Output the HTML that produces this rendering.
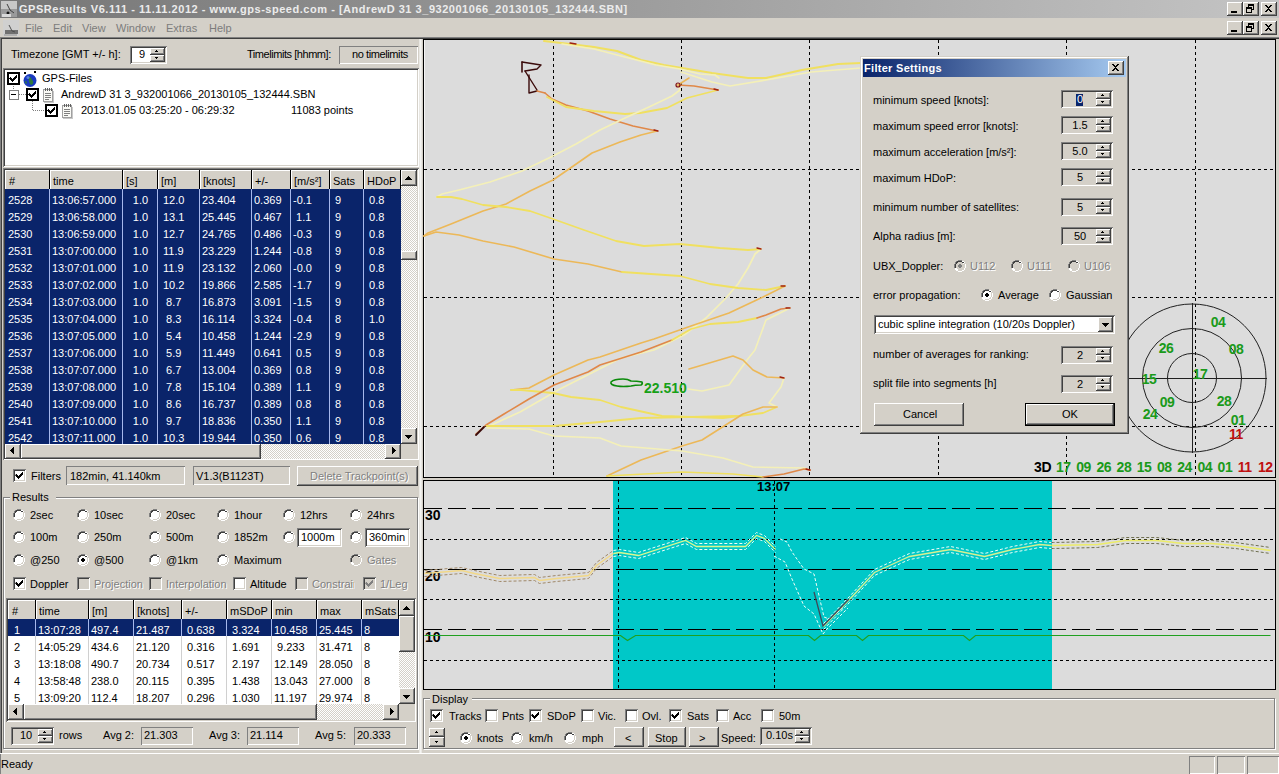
<!DOCTYPE html><html><head><meta charset="utf-8"><style>
*{margin:0;padding:0;box-sizing:border-box}
html,body{width:1279px;height:774px;overflow:hidden;background:#d4d0c8;font-family:"Liberation Sans",sans-serif;font-size:11px;color:#000}
body>div,body>svg{position:absolute}
.t{position:absolute;white-space:pre;line-height:13px;font-size:11px}
.b{font-weight:bold}
</style></head><body>
<div style="left:0px;top:0px;width:1279px;height:18px;background:linear-gradient(90deg,#767676,#c4c4c4)"></div>
<svg style="left:1px;top:1px" width="16" height="16"><rect x="0" y="0" width="16" height="8" fill="#c8c8c8"/><rect x="0" y="8" width="16" height="8" fill="#9a9a9a"/><path d="M6 3l3 6 4 3" stroke="#404040" fill="none"/><circle cx="7" cy="12" r="1.5" fill="#111"/><rect x="1" y="13" width="9" height="3" fill="#d8d8d8"/></svg>
<div class="t" style="left:19px;top:3px;font-weight:bold;color:#ececec;letter-spacing:0.53px">GPSResults V6.111 - 11.11.2012 - www.gps-speed.com - [AndrewD 31 3_932001066_20130105_132444.SBN]</div>
<div style="left:1227px;top:2px;width:16px;height:14px;background:#d4d0c8;box-shadow:inset -1px -1px #404040,inset 1px 1px #fff,inset -2px -2px #808080,inset 2px 2px #d4d0c8;"></div>
<div style="left:1243px;top:2px;width:16px;height:14px;background:#d4d0c8;box-shadow:inset -1px -1px #404040,inset 1px 1px #fff,inset -2px -2px #808080,inset 2px 2px #d4d0c8;"></div>
<div style="left:1261px;top:2px;width:16px;height:14px;background:#d4d0c8;box-shadow:inset -1px -1px #404040,inset 1px 1px #fff,inset -2px -2px #808080,inset 2px 2px #d4d0c8;"></div>
<svg style="left:1227px;top:2px" width="50" height="14" shape-rendering="crispEdges"><rect x="4" y="9" width="6" height="2" fill="#000"/><g fill="#000"><rect x="21" y="2" width="6" height="2"/><rect x="21" y="4" width="1" height="1"/><rect x="26" y="4" width="1" height="4"/><rect x="25" y="7" width="1" height="1"/><rect x="19" y="5" width="6" height="2"/><rect x="19" y="7" width="1" height="4"/><rect x="24" y="7" width="1" height="4"/><rect x="19" y="10" width="6" height="1"/></g><path d="M38 3h2v1h1v1h1v-1h1v-1h2v1h-1v1h-1v1h-1v1h1v1h1v1h1v1h-2v-1h-1v-1h-1v1h-1v1h-2v-1h1v-1h1v-1h1v-1h-1v-1h-1v-1h-1z" fill="#000"/></svg>
<svg style="left:3px;top:20px" width="16" height="16"><rect x="0" y="0" width="16" height="16" fill="#d0d0d0"/><rect x="2" y="10" width="13" height="4" fill="#707070"/><path d="M6 5l3 6 3 1" stroke="#505050" fill="none"/><rect x="1" y="14" width="13" height="2" fill="#b0b0b0"/></svg>
<div class="t" style="left:25px;top:22px;color:#7c7c7c">File</div>
<div class="t" style="left:53px;top:22px;color:#7c7c7c">Edit</div>
<div class="t" style="left:82px;top:22px;color:#7c7c7c">View</div>
<div class="t" style="left:116px;top:22px;color:#7c7c7c">Window</div>
<div class="t" style="left:166px;top:22px;color:#7c7c7c">Extras</div>
<div class="t" style="left:209px;top:22px;color:#7c7c7c">Help</div>
<div style="left:1227px;top:21px;width:16px;height:14px;background:#d4d0c8;box-shadow:inset -1px -1px #404040,inset 1px 1px #fff,inset -2px -2px #808080,inset 2px 2px #d4d0c8;"></div>
<div style="left:1243px;top:21px;width:16px;height:14px;background:#d4d0c8;box-shadow:inset -1px -1px #404040,inset 1px 1px #fff,inset -2px -2px #808080,inset 2px 2px #d4d0c8;"></div>
<div style="left:1261px;top:21px;width:16px;height:14px;background:#d4d0c8;box-shadow:inset -1px -1px #404040,inset 1px 1px #fff,inset -2px -2px #808080,inset 2px 2px #d4d0c8;"></div>
<svg style="left:1227px;top:21px" width="50" height="14" shape-rendering="crispEdges"><rect x="4" y="9" width="6" height="2" fill="#000"/><g fill="#000"><rect x="21" y="2" width="6" height="2"/><rect x="21" y="4" width="1" height="1"/><rect x="26" y="4" width="1" height="4"/><rect x="25" y="7" width="1" height="1"/><rect x="19" y="5" width="6" height="2"/><rect x="19" y="7" width="1" height="4"/><rect x="24" y="7" width="1" height="4"/><rect x="19" y="10" width="6" height="1"/></g><path d="M38 3h2v1h1v1h1v-1h1v-1h2v1h-1v1h-1v1h-1v1h1v1h1v1h1v1h-2v-1h-1v-1h-1v1h-1v1h-2v-1h1v-1h1v-1h1v-1h-1v-1h-1v-1h-1z" fill="#000"/></svg>
<div style="left:0px;top:37px;width:1279px;height:1px;background:#808080"></div>
<div style="left:0px;top:38px;width:1279px;height:1px;background:#404040"></div>
<div style="left:0px;top:38px;width:1px;height:736px;background:#808080"></div>
<div style="left:1px;top:39px;width:1px;height:714px;background:#404040"></div>
<div class="t" style="left:11px;top:48px;">Timezone [GMT +/- h]:</div>
<div style="left:130px;top:46px;width:37px;height:18px;background:#fff;box-shadow:inset 1px 1px #808080,inset -1px -1px #fff,inset 2px 2px #404040,inset -2px -2px #d4d0c8;"></div>
<div class="t" style="left:139px;top:48px;">9</div>
<div style="left:150px;top:48px;width:15px;height:7px;background:#d4d0c8;box-shadow:inset -1px -1px #404040,inset 1px 1px #fff,inset -2px -2px #808080,inset 2px 2px #d4d0c8;"></div>
<div style="left:150px;top:55px;width:15px;height:7px;background:#d4d0c8;box-shadow:inset -1px -1px #404040,inset 1px 1px #fff,inset -2px -2px #808080,inset 2px 2px #d4d0c8;"></div>
<svg style="left:150px;top:48px" width="15" height="14" shape-rendering="crispEdges"><path d="M6 2h1v1h1v1h-3v-1h1z" fill="#000"/><path d="M5 9h3v1h-1v1h-1v-1h-1z" fill="#000"/></svg>
<div class="t" style="left:247px;top:48px;letter-spacing:-0.45px">Timelimits [hhmm]:</div>
<div style="left:339px;top:46px;width:79px;height:18px;background:#d4d0c8;box-shadow:inset 1px 1px #808080,inset -1px -1px #fff;"></div>
<div class="t" style="left:352px;top:48px;letter-spacing:-0.4px">no timelimits</div>
<div style="left:3px;top:68px;width:416px;height:99px;background:#fff;box-shadow:inset 1px 1px #808080,inset -1px -1px #fff,inset 2px 2px #404040,inset -2px -2px #d4d0c8;"></div>
<svg style="left:0;top:68px" width="120" height="60" shape-rendering="crispEdges"><g fill="#808080"><rect x="13" y="18" width="1" height="1"/><rect x="13" y="20" width="1" height="1"/><rect x="13" y="22" width="1" height="1"/><rect x="13" y="24" width="1" height="1"/><rect x="19" y="26" width="1" height="1"/><rect x="21" y="26" width="1" height="1"/><rect x="23" y="26" width="1" height="1"/><rect x="25" y="26" width="1" height="1"/><rect x="32" y="33" width="1" height="1"/><rect x="32" y="35" width="1" height="1"/><rect x="32" y="37" width="1" height="1"/><rect x="32" y="39" width="1" height="1"/><rect x="32" y="41" width="1" height="1"/><rect x="33" y="42" width="1" height="1"/><rect x="35" y="42" width="1" height="1"/><rect x="37" y="42" width="1" height="1"/><rect x="39" y="42" width="1" height="1"/><rect x="41" y="42" width="1" height="1"/><rect x="43" y="42" width="1" height="1"/></g><rect x="9" y="22" width="9" height="9" fill="#fff" stroke="#808080" shape-rendering="crispEdges" transform="translate(0.5 0.5)" /><rect x="11" y="26" width="5" height="1" fill="#000"/></svg>
<div style="left:7px;top:72px;width:13px;height:13px;border:2px solid #000;background:#fff"></div>
<svg style="left:7px;top:72px" width="13" height="13" shape-rendering="crispEdges"><path d="M3 5h1v1h1v1h1v-1h1v-1h1v-1h1v-1h1v3h-1v1h-1v1h-1v1h-1v1h-1v-1h-1v-1h-1v-1h-1z" fill="#000"/></svg>
<svg style="left:22px;top:71px" width="16" height="17"><circle cx="8" cy="9.5" r="6.5" fill="#1a3ac0"/><path d="M5 6q3-1 4 1t2 3q1 3-2 4q-2-2-2-4t-2-4z M3 10q2 0 2 2l-1 1q-1-1-1-3z" fill="#2e7a3e"/><circle cx="6" cy="6.5" r="1.5" fill="#5a80e0"/><rect x="2" y="1" width="2" height="2" fill="#000"/><rect x="12" y="0" width="2" height="2" fill="#000"/></svg>
<div class="t" style="left:42px;top:72px;">GPS-Files</div>
<div style="left:26px;top:88px;width:13px;height:13px;border:2px solid #000;background:#fff"></div>
<svg style="left:26px;top:88px" width="13" height="13" shape-rendering="crispEdges"><path d="M3 5h1v1h1v1h1v-1h1v-1h1v-1h1v-1h1v3h-1v1h-1v1h-1v1h-1v1h-1v-1h-1v-1h-1v-1h-1z" fill="#000"/></svg>
<svg style="left:42px;top:87px" width="13" height="16" shape-rendering="crispEdges"><rect x="1" y="2" width="10" height="13" fill="#a0a0a0"/><rect x="2" y="3" width="8" height="11" fill="#fafaf6"/><rect x="11" y="4" width="1" height="11" fill="#c8c8c8"/><rect x="2" y="15" width="10" height="1" fill="#c8c8c8"/><g fill="#808080"><rect x="3" y="6" width="6" height="1"/><rect x="3" y="8" width="6" height="1"/><rect x="3" y="10" width="6" height="1"/><rect x="3" y="12" width="4" height="1"/></g><g fill="#606060"><rect x="3" y="1" width="1" height="3"/><rect x="5" y="1" width="1" height="3"/><rect x="7" y="1" width="1" height="3"/><rect x="9" y="1" width="1" height="3"/></g></svg>
<div class="t" style="left:61px;top:88px;">AndrewD 31 3_932001066_20130105_132444.SBN</div>
<div style="left:45px;top:104px;width:13px;height:13px;border:2px solid #000;background:#fff"></div>
<svg style="left:45px;top:104px" width="13" height="13" shape-rendering="crispEdges"><path d="M3 5h1v1h1v1h1v-1h1v-1h1v-1h1v-1h1v3h-1v1h-1v1h-1v1h-1v1h-1v-1h-1v-1h-1v-1h-1z" fill="#000"/></svg>
<svg style="left:61px;top:103px" width="13" height="16" shape-rendering="crispEdges"><rect x="1" y="2" width="10" height="13" fill="#a0a0a0"/><rect x="2" y="3" width="8" height="11" fill="#fafaf6"/><rect x="11" y="4" width="1" height="11" fill="#c8c8c8"/><rect x="2" y="15" width="10" height="1" fill="#c8c8c8"/><g fill="#808080"><rect x="3" y="6" width="6" height="1"/><rect x="3" y="8" width="6" height="1"/><rect x="3" y="10" width="6" height="1"/><rect x="3" y="12" width="4" height="1"/></g><g fill="#606060"><rect x="3" y="1" width="1" height="3"/><rect x="5" y="1" width="1" height="3"/><rect x="7" y="1" width="1" height="3"/><rect x="9" y="1" width="1" height="3"/></g></svg>
<div class="t" style="left:81px;top:104px;">2013.01.05 03:25:20 - 06:29:32</div>
<div class="t" style="left:291px;top:104px;">11083 points</div>
<div style="left:3px;top:168px;width:416px;height:292px;background:#fff;box-shadow:inset 1px 1px #808080,inset -1px -1px #fff,inset 2px 2px #404040,inset -2px -2px #d4d0c8"></div>
<div style="left:5px;top:170px;width:45px;height:19px;background:#d4d0c8;box-shadow:inset -1px 0 #000,inset 1px 1px #fff"></div>
<div class="t" style="left:9px;top:175px;">#</div>
<div style="left:50px;top:170px;width:73px;height:19px;background:#d4d0c8;box-shadow:inset -1px 0 #000,inset 1px 1px #fff"></div>
<div class="t" style="left:53px;top:175px;">time</div>
<div style="left:123px;top:170px;width:35px;height:19px;background:#d4d0c8;box-shadow:inset -1px 0 #000,inset 1px 1px #fff"></div>
<div class="t" style="left:126px;top:175px;">[s]</div>
<div style="left:158px;top:170px;width:42px;height:19px;background:#d4d0c8;box-shadow:inset -1px 0 #000,inset 1px 1px #fff"></div>
<div class="t" style="left:161px;top:175px;">[m]</div>
<div style="left:200px;top:170px;width:52px;height:19px;background:#d4d0c8;box-shadow:inset -1px 0 #000,inset 1px 1px #fff"></div>
<div class="t" style="left:203px;top:175px;">[knots]</div>
<div style="left:252px;top:170px;width:39px;height:19px;background:#d4d0c8;box-shadow:inset -1px 0 #000,inset 1px 1px #fff"></div>
<div class="t" style="left:255px;top:175px;">+/-</div>
<div style="left:291px;top:170px;width:39px;height:19px;background:#d4d0c8;box-shadow:inset -1px 0 #000,inset 1px 1px #fff"></div>
<div class="t" style="left:294px;top:175px;">[m/s²]</div>
<div style="left:330px;top:170px;width:34px;height:19px;background:#d4d0c8;box-shadow:inset -1px 0 #000,inset 1px 1px #fff"></div>
<div class="t" style="left:333px;top:175px;">Sats</div>
<div style="left:364px;top:170px;width:37px;height:19px;background:#d4d0c8;box-shadow:inset -1px 0 #000,inset 1px 1px #fff"></div>
<div class="t" style="left:367px;top:175px;">HDoP</div>
<div style="left:5px;top:189px;width:396px;height:17px;background:#0a246a"></div>
<div style="left:49px;top:189px;width:1px;height:17px;background:#a6b8ec"></div>
<div style="left:122px;top:189px;width:1px;height:17px;background:#a6b8ec"></div>
<div style="left:157px;top:189px;width:1px;height:17px;background:#a6b8ec"></div>
<div style="left:199px;top:189px;width:1px;height:17px;background:#a6b8ec"></div>
<div style="left:251px;top:189px;width:1px;height:17px;background:#a6b8ec"></div>
<div style="left:290px;top:189px;width:1px;height:17px;background:#a6b8ec"></div>
<div style="left:329px;top:189px;width:1px;height:17px;background:#a6b8ec"></div>
<div style="left:363px;top:189px;width:1px;height:17px;background:#a6b8ec"></div>
<div class="t" style="left:8px;top:194px;color:#fff">2528</div>
<div class="t" style="left:52px;top:194px;color:#fff">13:06:57.000</div>
<div class="t" style="left:123px;top:194px;width:35px;text-align:center;color:#fff;">1.0</div>
<div class="t" style="left:163px;top:194px;color:#fff">12.0</div>
<div class="t" style="left:202px;top:194px;color:#fff">23.404</div>
<div class="t" style="left:254px;top:194px;color:#fff">0.369</div>
<div class="t" style="left:293px;top:194px;color:#fff">-0.1</div>
<div class="t" style="left:332px;top:194px;color:#fff"> 9</div>
<div class="t" style="left:366px;top:194px;color:#fff"> 0.8</div>
<div style="left:5px;top:206px;width:396px;height:17px;background:#0a246a"></div>
<div style="left:49px;top:206px;width:1px;height:17px;background:#a6b8ec"></div>
<div style="left:122px;top:206px;width:1px;height:17px;background:#a6b8ec"></div>
<div style="left:157px;top:206px;width:1px;height:17px;background:#a6b8ec"></div>
<div style="left:199px;top:206px;width:1px;height:17px;background:#a6b8ec"></div>
<div style="left:251px;top:206px;width:1px;height:17px;background:#a6b8ec"></div>
<div style="left:290px;top:206px;width:1px;height:17px;background:#a6b8ec"></div>
<div style="left:329px;top:206px;width:1px;height:17px;background:#a6b8ec"></div>
<div style="left:363px;top:206px;width:1px;height:17px;background:#a6b8ec"></div>
<div class="t" style="left:8px;top:211px;color:#fff">2529</div>
<div class="t" style="left:52px;top:211px;color:#fff">13:06:58.000</div>
<div class="t" style="left:123px;top:211px;width:35px;text-align:center;color:#fff;">1.0</div>
<div class="t" style="left:163px;top:211px;color:#fff">13.1</div>
<div class="t" style="left:202px;top:211px;color:#fff">25.445</div>
<div class="t" style="left:254px;top:211px;color:#fff">0.467</div>
<div class="t" style="left:293px;top:211px;color:#fff"> 1.1</div>
<div class="t" style="left:332px;top:211px;color:#fff"> 9</div>
<div class="t" style="left:366px;top:211px;color:#fff"> 0.8</div>
<div style="left:5px;top:223px;width:396px;height:17px;background:#0a246a"></div>
<div style="left:49px;top:223px;width:1px;height:17px;background:#a6b8ec"></div>
<div style="left:122px;top:223px;width:1px;height:17px;background:#a6b8ec"></div>
<div style="left:157px;top:223px;width:1px;height:17px;background:#a6b8ec"></div>
<div style="left:199px;top:223px;width:1px;height:17px;background:#a6b8ec"></div>
<div style="left:251px;top:223px;width:1px;height:17px;background:#a6b8ec"></div>
<div style="left:290px;top:223px;width:1px;height:17px;background:#a6b8ec"></div>
<div style="left:329px;top:223px;width:1px;height:17px;background:#a6b8ec"></div>
<div style="left:363px;top:223px;width:1px;height:17px;background:#a6b8ec"></div>
<div class="t" style="left:8px;top:228px;color:#fff">2530</div>
<div class="t" style="left:52px;top:228px;color:#fff">13:06:59.000</div>
<div class="t" style="left:123px;top:228px;width:35px;text-align:center;color:#fff;">1.0</div>
<div class="t" style="left:163px;top:228px;color:#fff">12.7</div>
<div class="t" style="left:202px;top:228px;color:#fff">24.765</div>
<div class="t" style="left:254px;top:228px;color:#fff">0.486</div>
<div class="t" style="left:293px;top:228px;color:#fff">-0.3</div>
<div class="t" style="left:332px;top:228px;color:#fff"> 9</div>
<div class="t" style="left:366px;top:228px;color:#fff"> 0.8</div>
<div style="left:5px;top:240px;width:396px;height:17px;background:#0a246a"></div>
<div style="left:49px;top:240px;width:1px;height:17px;background:#a6b8ec"></div>
<div style="left:122px;top:240px;width:1px;height:17px;background:#a6b8ec"></div>
<div style="left:157px;top:240px;width:1px;height:17px;background:#a6b8ec"></div>
<div style="left:199px;top:240px;width:1px;height:17px;background:#a6b8ec"></div>
<div style="left:251px;top:240px;width:1px;height:17px;background:#a6b8ec"></div>
<div style="left:290px;top:240px;width:1px;height:17px;background:#a6b8ec"></div>
<div style="left:329px;top:240px;width:1px;height:17px;background:#a6b8ec"></div>
<div style="left:363px;top:240px;width:1px;height:17px;background:#a6b8ec"></div>
<div class="t" style="left:8px;top:245px;color:#fff">2531</div>
<div class="t" style="left:52px;top:245px;color:#fff">13:07:00.000</div>
<div class="t" style="left:123px;top:245px;width:35px;text-align:center;color:#fff;">1.0</div>
<div class="t" style="left:163px;top:245px;color:#fff">11.9</div>
<div class="t" style="left:202px;top:245px;color:#fff">23.229</div>
<div class="t" style="left:254px;top:245px;color:#fff">1.244</div>
<div class="t" style="left:293px;top:245px;color:#fff">-0.8</div>
<div class="t" style="left:332px;top:245px;color:#fff"> 9</div>
<div class="t" style="left:366px;top:245px;color:#fff"> 0.8</div>
<div style="left:5px;top:257px;width:396px;height:17px;background:#0a246a"></div>
<div style="left:49px;top:257px;width:1px;height:17px;background:#a6b8ec"></div>
<div style="left:122px;top:257px;width:1px;height:17px;background:#a6b8ec"></div>
<div style="left:157px;top:257px;width:1px;height:17px;background:#a6b8ec"></div>
<div style="left:199px;top:257px;width:1px;height:17px;background:#a6b8ec"></div>
<div style="left:251px;top:257px;width:1px;height:17px;background:#a6b8ec"></div>
<div style="left:290px;top:257px;width:1px;height:17px;background:#a6b8ec"></div>
<div style="left:329px;top:257px;width:1px;height:17px;background:#a6b8ec"></div>
<div style="left:363px;top:257px;width:1px;height:17px;background:#a6b8ec"></div>
<div class="t" style="left:8px;top:262px;color:#fff">2532</div>
<div class="t" style="left:52px;top:262px;color:#fff">13:07:01.000</div>
<div class="t" style="left:123px;top:262px;width:35px;text-align:center;color:#fff;">1.0</div>
<div class="t" style="left:163px;top:262px;color:#fff">11.9</div>
<div class="t" style="left:202px;top:262px;color:#fff">23.132</div>
<div class="t" style="left:254px;top:262px;color:#fff">2.060</div>
<div class="t" style="left:293px;top:262px;color:#fff">-0.0</div>
<div class="t" style="left:332px;top:262px;color:#fff"> 9</div>
<div class="t" style="left:366px;top:262px;color:#fff"> 0.8</div>
<div style="left:5px;top:274px;width:396px;height:17px;background:#0a246a"></div>
<div style="left:49px;top:274px;width:1px;height:17px;background:#a6b8ec"></div>
<div style="left:122px;top:274px;width:1px;height:17px;background:#a6b8ec"></div>
<div style="left:157px;top:274px;width:1px;height:17px;background:#a6b8ec"></div>
<div style="left:199px;top:274px;width:1px;height:17px;background:#a6b8ec"></div>
<div style="left:251px;top:274px;width:1px;height:17px;background:#a6b8ec"></div>
<div style="left:290px;top:274px;width:1px;height:17px;background:#a6b8ec"></div>
<div style="left:329px;top:274px;width:1px;height:17px;background:#a6b8ec"></div>
<div style="left:363px;top:274px;width:1px;height:17px;background:#a6b8ec"></div>
<div class="t" style="left:8px;top:279px;color:#fff">2533</div>
<div class="t" style="left:52px;top:279px;color:#fff">13:07:02.000</div>
<div class="t" style="left:123px;top:279px;width:35px;text-align:center;color:#fff;">1.0</div>
<div class="t" style="left:163px;top:279px;color:#fff">10.2</div>
<div class="t" style="left:202px;top:279px;color:#fff">19.866</div>
<div class="t" style="left:254px;top:279px;color:#fff">2.585</div>
<div class="t" style="left:293px;top:279px;color:#fff">-1.7</div>
<div class="t" style="left:332px;top:279px;color:#fff"> 9</div>
<div class="t" style="left:366px;top:279px;color:#fff"> 0.8</div>
<div style="left:5px;top:291px;width:396px;height:17px;background:#0a246a"></div>
<div style="left:49px;top:291px;width:1px;height:17px;background:#a6b8ec"></div>
<div style="left:122px;top:291px;width:1px;height:17px;background:#a6b8ec"></div>
<div style="left:157px;top:291px;width:1px;height:17px;background:#a6b8ec"></div>
<div style="left:199px;top:291px;width:1px;height:17px;background:#a6b8ec"></div>
<div style="left:251px;top:291px;width:1px;height:17px;background:#a6b8ec"></div>
<div style="left:290px;top:291px;width:1px;height:17px;background:#a6b8ec"></div>
<div style="left:329px;top:291px;width:1px;height:17px;background:#a6b8ec"></div>
<div style="left:363px;top:291px;width:1px;height:17px;background:#a6b8ec"></div>
<div class="t" style="left:8px;top:296px;color:#fff">2534</div>
<div class="t" style="left:52px;top:296px;color:#fff">13:07:03.000</div>
<div class="t" style="left:123px;top:296px;width:35px;text-align:center;color:#fff;">1.0</div>
<div class="t" style="left:163px;top:296px;color:#fff"> 8.7</div>
<div class="t" style="left:202px;top:296px;color:#fff">16.873</div>
<div class="t" style="left:254px;top:296px;color:#fff">3.091</div>
<div class="t" style="left:293px;top:296px;color:#fff">-1.5</div>
<div class="t" style="left:332px;top:296px;color:#fff"> 9</div>
<div class="t" style="left:366px;top:296px;color:#fff"> 0.8</div>
<div style="left:5px;top:308px;width:396px;height:17px;background:#0a246a"></div>
<div style="left:49px;top:308px;width:1px;height:17px;background:#a6b8ec"></div>
<div style="left:122px;top:308px;width:1px;height:17px;background:#a6b8ec"></div>
<div style="left:157px;top:308px;width:1px;height:17px;background:#a6b8ec"></div>
<div style="left:199px;top:308px;width:1px;height:17px;background:#a6b8ec"></div>
<div style="left:251px;top:308px;width:1px;height:17px;background:#a6b8ec"></div>
<div style="left:290px;top:308px;width:1px;height:17px;background:#a6b8ec"></div>
<div style="left:329px;top:308px;width:1px;height:17px;background:#a6b8ec"></div>
<div style="left:363px;top:308px;width:1px;height:17px;background:#a6b8ec"></div>
<div class="t" style="left:8px;top:313px;color:#fff">2535</div>
<div class="t" style="left:52px;top:313px;color:#fff">13:07:04.000</div>
<div class="t" style="left:123px;top:313px;width:35px;text-align:center;color:#fff;">1.0</div>
<div class="t" style="left:163px;top:313px;color:#fff"> 8.3</div>
<div class="t" style="left:202px;top:313px;color:#fff">16.114</div>
<div class="t" style="left:254px;top:313px;color:#fff">3.324</div>
<div class="t" style="left:293px;top:313px;color:#fff">-0.4</div>
<div class="t" style="left:332px;top:313px;color:#fff"> 8</div>
<div class="t" style="left:366px;top:313px;color:#fff"> 1.0</div>
<div style="left:5px;top:325px;width:396px;height:17px;background:#0a246a"></div>
<div style="left:49px;top:325px;width:1px;height:17px;background:#a6b8ec"></div>
<div style="left:122px;top:325px;width:1px;height:17px;background:#a6b8ec"></div>
<div style="left:157px;top:325px;width:1px;height:17px;background:#a6b8ec"></div>
<div style="left:199px;top:325px;width:1px;height:17px;background:#a6b8ec"></div>
<div style="left:251px;top:325px;width:1px;height:17px;background:#a6b8ec"></div>
<div style="left:290px;top:325px;width:1px;height:17px;background:#a6b8ec"></div>
<div style="left:329px;top:325px;width:1px;height:17px;background:#a6b8ec"></div>
<div style="left:363px;top:325px;width:1px;height:17px;background:#a6b8ec"></div>
<div class="t" style="left:8px;top:330px;color:#fff">2536</div>
<div class="t" style="left:52px;top:330px;color:#fff">13:07:05.000</div>
<div class="t" style="left:123px;top:330px;width:35px;text-align:center;color:#fff;">1.0</div>
<div class="t" style="left:163px;top:330px;color:#fff"> 5.4</div>
<div class="t" style="left:202px;top:330px;color:#fff">10.458</div>
<div class="t" style="left:254px;top:330px;color:#fff">1.244</div>
<div class="t" style="left:293px;top:330px;color:#fff">-2.9</div>
<div class="t" style="left:332px;top:330px;color:#fff"> 9</div>
<div class="t" style="left:366px;top:330px;color:#fff"> 0.8</div>
<div style="left:5px;top:342px;width:396px;height:17px;background:#0a246a"></div>
<div style="left:49px;top:342px;width:1px;height:17px;background:#a6b8ec"></div>
<div style="left:122px;top:342px;width:1px;height:17px;background:#a6b8ec"></div>
<div style="left:157px;top:342px;width:1px;height:17px;background:#a6b8ec"></div>
<div style="left:199px;top:342px;width:1px;height:17px;background:#a6b8ec"></div>
<div style="left:251px;top:342px;width:1px;height:17px;background:#a6b8ec"></div>
<div style="left:290px;top:342px;width:1px;height:17px;background:#a6b8ec"></div>
<div style="left:329px;top:342px;width:1px;height:17px;background:#a6b8ec"></div>
<div style="left:363px;top:342px;width:1px;height:17px;background:#a6b8ec"></div>
<div class="t" style="left:8px;top:347px;color:#fff">2537</div>
<div class="t" style="left:52px;top:347px;color:#fff">13:07:06.000</div>
<div class="t" style="left:123px;top:347px;width:35px;text-align:center;color:#fff;">1.0</div>
<div class="t" style="left:163px;top:347px;color:#fff"> 5.9</div>
<div class="t" style="left:202px;top:347px;color:#fff">11.449</div>
<div class="t" style="left:254px;top:347px;color:#fff">0.641</div>
<div class="t" style="left:293px;top:347px;color:#fff"> 0.5</div>
<div class="t" style="left:332px;top:347px;color:#fff"> 9</div>
<div class="t" style="left:366px;top:347px;color:#fff"> 0.8</div>
<div style="left:5px;top:359px;width:396px;height:17px;background:#0a246a"></div>
<div style="left:49px;top:359px;width:1px;height:17px;background:#a6b8ec"></div>
<div style="left:122px;top:359px;width:1px;height:17px;background:#a6b8ec"></div>
<div style="left:157px;top:359px;width:1px;height:17px;background:#a6b8ec"></div>
<div style="left:199px;top:359px;width:1px;height:17px;background:#a6b8ec"></div>
<div style="left:251px;top:359px;width:1px;height:17px;background:#a6b8ec"></div>
<div style="left:290px;top:359px;width:1px;height:17px;background:#a6b8ec"></div>
<div style="left:329px;top:359px;width:1px;height:17px;background:#a6b8ec"></div>
<div style="left:363px;top:359px;width:1px;height:17px;background:#a6b8ec"></div>
<div class="t" style="left:8px;top:364px;color:#fff">2538</div>
<div class="t" style="left:52px;top:364px;color:#fff">13:07:07.000</div>
<div class="t" style="left:123px;top:364px;width:35px;text-align:center;color:#fff;">1.0</div>
<div class="t" style="left:163px;top:364px;color:#fff"> 6.7</div>
<div class="t" style="left:202px;top:364px;color:#fff">13.004</div>
<div class="t" style="left:254px;top:364px;color:#fff">0.369</div>
<div class="t" style="left:293px;top:364px;color:#fff"> 0.8</div>
<div class="t" style="left:332px;top:364px;color:#fff"> 9</div>
<div class="t" style="left:366px;top:364px;color:#fff"> 0.8</div>
<div style="left:5px;top:376px;width:396px;height:17px;background:#0a246a"></div>
<div style="left:49px;top:376px;width:1px;height:17px;background:#a6b8ec"></div>
<div style="left:122px;top:376px;width:1px;height:17px;background:#a6b8ec"></div>
<div style="left:157px;top:376px;width:1px;height:17px;background:#a6b8ec"></div>
<div style="left:199px;top:376px;width:1px;height:17px;background:#a6b8ec"></div>
<div style="left:251px;top:376px;width:1px;height:17px;background:#a6b8ec"></div>
<div style="left:290px;top:376px;width:1px;height:17px;background:#a6b8ec"></div>
<div style="left:329px;top:376px;width:1px;height:17px;background:#a6b8ec"></div>
<div style="left:363px;top:376px;width:1px;height:17px;background:#a6b8ec"></div>
<div class="t" style="left:8px;top:381px;color:#fff">2539</div>
<div class="t" style="left:52px;top:381px;color:#fff">13:07:08.000</div>
<div class="t" style="left:123px;top:381px;width:35px;text-align:center;color:#fff;">1.0</div>
<div class="t" style="left:163px;top:381px;color:#fff"> 7.8</div>
<div class="t" style="left:202px;top:381px;color:#fff">15.104</div>
<div class="t" style="left:254px;top:381px;color:#fff">0.389</div>
<div class="t" style="left:293px;top:381px;color:#fff"> 1.1</div>
<div class="t" style="left:332px;top:381px;color:#fff"> 9</div>
<div class="t" style="left:366px;top:381px;color:#fff"> 0.8</div>
<div style="left:5px;top:393px;width:396px;height:17px;background:#0a246a"></div>
<div style="left:49px;top:393px;width:1px;height:17px;background:#a6b8ec"></div>
<div style="left:122px;top:393px;width:1px;height:17px;background:#a6b8ec"></div>
<div style="left:157px;top:393px;width:1px;height:17px;background:#a6b8ec"></div>
<div style="left:199px;top:393px;width:1px;height:17px;background:#a6b8ec"></div>
<div style="left:251px;top:393px;width:1px;height:17px;background:#a6b8ec"></div>
<div style="left:290px;top:393px;width:1px;height:17px;background:#a6b8ec"></div>
<div style="left:329px;top:393px;width:1px;height:17px;background:#a6b8ec"></div>
<div style="left:363px;top:393px;width:1px;height:17px;background:#a6b8ec"></div>
<div class="t" style="left:8px;top:398px;color:#fff">2540</div>
<div class="t" style="left:52px;top:398px;color:#fff">13:07:09.000</div>
<div class="t" style="left:123px;top:398px;width:35px;text-align:center;color:#fff;">1.0</div>
<div class="t" style="left:163px;top:398px;color:#fff"> 8.6</div>
<div class="t" style="left:202px;top:398px;color:#fff">16.737</div>
<div class="t" style="left:254px;top:398px;color:#fff">0.389</div>
<div class="t" style="left:293px;top:398px;color:#fff"> 0.8</div>
<div class="t" style="left:332px;top:398px;color:#fff"> 8</div>
<div class="t" style="left:366px;top:398px;color:#fff"> 0.8</div>
<div style="left:5px;top:410px;width:396px;height:17px;background:#0a246a"></div>
<div style="left:49px;top:410px;width:1px;height:17px;background:#a6b8ec"></div>
<div style="left:122px;top:410px;width:1px;height:17px;background:#a6b8ec"></div>
<div style="left:157px;top:410px;width:1px;height:17px;background:#a6b8ec"></div>
<div style="left:199px;top:410px;width:1px;height:17px;background:#a6b8ec"></div>
<div style="left:251px;top:410px;width:1px;height:17px;background:#a6b8ec"></div>
<div style="left:290px;top:410px;width:1px;height:17px;background:#a6b8ec"></div>
<div style="left:329px;top:410px;width:1px;height:17px;background:#a6b8ec"></div>
<div style="left:363px;top:410px;width:1px;height:17px;background:#a6b8ec"></div>
<div class="t" style="left:8px;top:415px;color:#fff">2541</div>
<div class="t" style="left:52px;top:415px;color:#fff">13:07:10.000</div>
<div class="t" style="left:123px;top:415px;width:35px;text-align:center;color:#fff;">1.0</div>
<div class="t" style="left:163px;top:415px;color:#fff"> 9.7</div>
<div class="t" style="left:202px;top:415px;color:#fff">18.836</div>
<div class="t" style="left:254px;top:415px;color:#fff">0.350</div>
<div class="t" style="left:293px;top:415px;color:#fff"> 1.1</div>
<div class="t" style="left:332px;top:415px;color:#fff"> 9</div>
<div class="t" style="left:366px;top:415px;color:#fff"> 0.8</div>
<div style="left:5px;top:427px;width:396px;height:17px;background:#0a246a"></div>
<div style="left:49px;top:427px;width:1px;height:17px;background:#a6b8ec"></div>
<div style="left:122px;top:427px;width:1px;height:17px;background:#a6b8ec"></div>
<div style="left:157px;top:427px;width:1px;height:17px;background:#a6b8ec"></div>
<div style="left:199px;top:427px;width:1px;height:17px;background:#a6b8ec"></div>
<div style="left:251px;top:427px;width:1px;height:17px;background:#a6b8ec"></div>
<div style="left:290px;top:427px;width:1px;height:17px;background:#a6b8ec"></div>
<div style="left:329px;top:427px;width:1px;height:17px;background:#a6b8ec"></div>
<div style="left:363px;top:427px;width:1px;height:17px;background:#a6b8ec"></div>
<div class="t" style="left:8px;top:432px;color:#fff">2542</div>
<div class="t" style="left:52px;top:432px;color:#fff">13:07:11.000</div>
<div class="t" style="left:123px;top:432px;width:35px;text-align:center;color:#fff;">1.0</div>
<div class="t" style="left:163px;top:432px;color:#fff">10.3</div>
<div class="t" style="left:202px;top:432px;color:#fff">19.944</div>
<div class="t" style="left:254px;top:432px;color:#fff">0.350</div>
<div class="t" style="left:293px;top:432px;color:#fff"> 0.6</div>
<div class="t" style="left:332px;top:432px;color:#fff"> 9</div>
<div class="t" style="left:366px;top:432px;color:#fff"> 0.8</div>
<div style="left:401px;top:186px;width:16px;height:258px;background-color:#fff;background-image:linear-gradient(45deg,#d4d0c8 25%,transparent 25%,transparent 75%,#d4d0c8 75%),linear-gradient(45deg,#d4d0c8 25%,transparent 25%,transparent 75%,#d4d0c8 75%);background-size:2px 2px;background-position:0 0,1px 1px"></div>
<div style="left:401px;top:170px;width:16px;height:16px;background:#d4d0c8;box-shadow:inset -1px -1px #404040,inset 1px 1px #fff,inset -2px -2px #808080,inset 2px 2px #d4d0c8;"></div>
<svg style="left:401px;top:170px" width="16" height="16" shape-rendering="crispEdges"><path transform="translate(-401 -170)" d="M408 176h1v1h1v1h1v1h1v1h-7v-1h1v-1h1v-1h1z" fill="#000"/></svg>
<div style="left:401px;top:251px;width:16px;height:9px;background:#d4d0c8;box-shadow:inset -1px -1px #404040,inset 1px 1px #fff,inset -2px -2px #808080,inset 2px 2px #d4d0c8;"></div>
<div style="left:401px;top:428px;width:16px;height:16px;background:#d4d0c8;box-shadow:inset -1px -1px #404040,inset 1px 1px #fff,inset -2px -2px #808080,inset 2px 2px #d4d0c8;"></div>
<svg style="left:401px;top:428px" width="16" height="16" shape-rendering="crispEdges"><path transform="translate(-401 -428)" d="M405 435h7v1h-1v1h-1v1h-1v1h-1v-1h-1v-1h-1v-1h-1z" fill="#000"/></svg>
<div style="left:5px;top:444px;width:396px;height:15px;background-color:#fff;background-image:linear-gradient(45deg,#d4d0c8 25%,transparent 25%,transparent 75%,#d4d0c8 75%),linear-gradient(45deg,#d4d0c8 25%,transparent 25%,transparent 75%,#d4d0c8 75%);background-size:2px 2px;background-position:0 0,1px 1px"></div>
<div style="left:5px;top:444px;width:16px;height:15px;background:#d4d0c8;box-shadow:inset -1px -1px #404040,inset 1px 1px #fff,inset -2px -2px #808080,inset 2px 2px #d4d0c8;"></div>
<svg style="left:5px;top:444px" width="16" height="15" shape-rendering="crispEdges"><path transform="translate(-5 -444)" d="M13 447h1v7h-1v-1h-1v-1h-1v-1h-1v-1h1v-1h1v-1h1z" fill="#000"/></svg>
<div style="left:21px;top:444px;width:240px;height:15px;background:#d4d0c8;box-shadow:inset -1px -1px #404040,inset 1px 1px #fff,inset -2px -2px #808080,inset 2px 2px #d4d0c8;"></div>
<div style="left:385px;top:444px;width:16px;height:15px;background:#d4d0c8;box-shadow:inset -1px -1px #404040,inset 1px 1px #fff,inset -2px -2px #808080,inset 2px 2px #d4d0c8;"></div>
<svg style="left:385px;top:444px" width="16" height="15" shape-rendering="crispEdges"><path transform="translate(-385 -444)" d="M392 447h1v1h1v1h1v1h1v1h-1v1h-1v1h-1v1h-1z" fill="#000"/></svg>
<div style="left:401px;top:444px;width:16px;height:15px;background:#d4d0c8"></div>
<div style="left:13px;top:469px;width:13px;height:13px;background:#fff;box-shadow:inset 1px 1px #808080,inset -1px -1px #fff,inset 2px 2px #404040,inset -2px -2px #d4d0c8;"></div>
<svg style="left:13px;top:469px" width="13" height="13"><path d="M3 5h1v1h1v1h1v-1h1v-1h1v-1h1v-1h1v3h-1v1h-1v1h-1v1h-1v1h-1v-1h-1v-1h-1v-1h-1z" fill="#000"/></svg>
<div class="t" style="left:31px;top:470px;">Filters</div>
<div style="left:66px;top:466px;width:119px;height:19px;background:#d4d0c8;box-shadow:inset 1px 1px #808080,inset -1px -1px #fff;"></div>
<div class="t" style="left:70px;top:470px;">182min, 41.140km</div>
<div style="left:193px;top:466px;width:97px;height:19px;background:#d4d0c8;box-shadow:inset 1px 1px #808080,inset -1px -1px #fff;"></div>
<div class="t" style="left:196px;top:470px;">V1.3(B1123T)</div>
<div style="left:297px;top:466px;width:121px;height:20px;background:#d4d0c8;box-shadow:inset -1px -1px #404040,inset 1px 1px #fff,inset -2px -2px #808080,inset 2px 2px #d4d0c8;"></div>
<div class="t" style="left:310px;top:470px;color:#fff;left:311px;top:471px">Delete Trackpoint(s)</div>
<div class="t" style="left:310px;top:470px;color:#808080">Delete Trackpoint(s)</div>
<div style="left:4px;top:498px;width:415px;height:252px;border:1px solid #fff"></div>
<div style="left:3px;top:497px;width:415px;height:252px;border:1px solid #808080"></div>
<div style="left:10px;top:491px;width:46px;height:13px;background:#d4d0c8"></div>
<div class="t" style="left:12px;top:491px;">Results</div>
<svg style="left:13px;top:509px" width="12" height="12" shape-rendering="crispEdges"><path d="M4 0h4v1h2v1h1v2h1v4h-1v2h-1v1h-2v1h-4v-1h-2v-1h-1v-2h-1v-4h1v-2h1v-1h2z" fill="#fff"/><path d="M4 0h4v1h-4v1h-2v2h-1v4h-1v-4h1v-2h1v-1h2z" fill="#808080"/><path d="M4 1h4v1h2v1h-2v-1h-4v1h-1v1h-1v4h-1v-4h1v-2h1v-1h1z" fill="#404040"/><path d="M4 2h4v1h1v1h1v4h-1v1h-1v1h-4v-1h-1v-1h-1v-4h1v-1h1z" fill="#fff"/><path d="M10 3h1v5h-1v2h-2v1h-4v-1h4v-1h1v-1h1z" fill="#d4d0c8"/></svg>
<div class="t" style="left:30px;top:509px;">2sec</div>
<svg style="left:13px;top:531px" width="12" height="12" shape-rendering="crispEdges"><path d="M4 0h4v1h2v1h1v2h1v4h-1v2h-1v1h-2v1h-4v-1h-2v-1h-1v-2h-1v-4h1v-2h1v-1h2z" fill="#fff"/><path d="M4 0h4v1h-4v1h-2v2h-1v4h-1v-4h1v-2h1v-1h2z" fill="#808080"/><path d="M4 1h4v1h2v1h-2v-1h-4v1h-1v1h-1v4h-1v-4h1v-2h1v-1h1z" fill="#404040"/><path d="M4 2h4v1h1v1h1v4h-1v1h-1v1h-4v-1h-1v-1h-1v-4h1v-1h1z" fill="#fff"/><path d="M10 3h1v5h-1v2h-2v1h-4v-1h4v-1h1v-1h1z" fill="#d4d0c8"/></svg>
<div class="t" style="left:30px;top:531px;">100m</div>
<svg style="left:77px;top:509px" width="12" height="12" shape-rendering="crispEdges"><path d="M4 0h4v1h2v1h1v2h1v4h-1v2h-1v1h-2v1h-4v-1h-2v-1h-1v-2h-1v-4h1v-2h1v-1h2z" fill="#fff"/><path d="M4 0h4v1h-4v1h-2v2h-1v4h-1v-4h1v-2h1v-1h2z" fill="#808080"/><path d="M4 1h4v1h2v1h-2v-1h-4v1h-1v1h-1v4h-1v-4h1v-2h1v-1h1z" fill="#404040"/><path d="M4 2h4v1h1v1h1v4h-1v1h-1v1h-4v-1h-1v-1h-1v-4h1v-1h1z" fill="#fff"/><path d="M10 3h1v5h-1v2h-2v1h-4v-1h4v-1h1v-1h1z" fill="#d4d0c8"/></svg>
<div class="t" style="left:94px;top:509px;">10sec</div>
<svg style="left:77px;top:531px" width="12" height="12" shape-rendering="crispEdges"><path d="M4 0h4v1h2v1h1v2h1v4h-1v2h-1v1h-2v1h-4v-1h-2v-1h-1v-2h-1v-4h1v-2h1v-1h2z" fill="#fff"/><path d="M4 0h4v1h-4v1h-2v2h-1v4h-1v-4h1v-2h1v-1h2z" fill="#808080"/><path d="M4 1h4v1h2v1h-2v-1h-4v1h-1v1h-1v4h-1v-4h1v-2h1v-1h1z" fill="#404040"/><path d="M4 2h4v1h1v1h1v4h-1v1h-1v1h-4v-1h-1v-1h-1v-4h1v-1h1z" fill="#fff"/><path d="M10 3h1v5h-1v2h-2v1h-4v-1h4v-1h1v-1h1z" fill="#d4d0c8"/></svg>
<div class="t" style="left:94px;top:531px;">250m</div>
<svg style="left:149px;top:509px" width="12" height="12" shape-rendering="crispEdges"><path d="M4 0h4v1h2v1h1v2h1v4h-1v2h-1v1h-2v1h-4v-1h-2v-1h-1v-2h-1v-4h1v-2h1v-1h2z" fill="#fff"/><path d="M4 0h4v1h-4v1h-2v2h-1v4h-1v-4h1v-2h1v-1h2z" fill="#808080"/><path d="M4 1h4v1h2v1h-2v-1h-4v1h-1v1h-1v4h-1v-4h1v-2h1v-1h1z" fill="#404040"/><path d="M4 2h4v1h1v1h1v4h-1v1h-1v1h-4v-1h-1v-1h-1v-4h1v-1h1z" fill="#fff"/><path d="M10 3h1v5h-1v2h-2v1h-4v-1h4v-1h1v-1h1z" fill="#d4d0c8"/></svg>
<div class="t" style="left:166px;top:509px;">20sec</div>
<svg style="left:149px;top:531px" width="12" height="12" shape-rendering="crispEdges"><path d="M4 0h4v1h2v1h1v2h1v4h-1v2h-1v1h-2v1h-4v-1h-2v-1h-1v-2h-1v-4h1v-2h1v-1h2z" fill="#fff"/><path d="M4 0h4v1h-4v1h-2v2h-1v4h-1v-4h1v-2h1v-1h2z" fill="#808080"/><path d="M4 1h4v1h2v1h-2v-1h-4v1h-1v1h-1v4h-1v-4h1v-2h1v-1h1z" fill="#404040"/><path d="M4 2h4v1h1v1h1v4h-1v1h-1v1h-4v-1h-1v-1h-1v-4h1v-1h1z" fill="#fff"/><path d="M10 3h1v5h-1v2h-2v1h-4v-1h4v-1h1v-1h1z" fill="#d4d0c8"/></svg>
<div class="t" style="left:166px;top:531px;">500m</div>
<svg style="left:217px;top:509px" width="12" height="12" shape-rendering="crispEdges"><path d="M4 0h4v1h2v1h1v2h1v4h-1v2h-1v1h-2v1h-4v-1h-2v-1h-1v-2h-1v-4h1v-2h1v-1h2z" fill="#fff"/><path d="M4 0h4v1h-4v1h-2v2h-1v4h-1v-4h1v-2h1v-1h2z" fill="#808080"/><path d="M4 1h4v1h2v1h-2v-1h-4v1h-1v1h-1v4h-1v-4h1v-2h1v-1h1z" fill="#404040"/><path d="M4 2h4v1h1v1h1v4h-1v1h-1v1h-4v-1h-1v-1h-1v-4h1v-1h1z" fill="#fff"/><path d="M10 3h1v5h-1v2h-2v1h-4v-1h4v-1h1v-1h1z" fill="#d4d0c8"/></svg>
<div class="t" style="left:234px;top:509px;">1hour</div>
<svg style="left:217px;top:531px" width="12" height="12" shape-rendering="crispEdges"><path d="M4 0h4v1h2v1h1v2h1v4h-1v2h-1v1h-2v1h-4v-1h-2v-1h-1v-2h-1v-4h1v-2h1v-1h2z" fill="#fff"/><path d="M4 0h4v1h-4v1h-2v2h-1v4h-1v-4h1v-2h1v-1h2z" fill="#808080"/><path d="M4 1h4v1h2v1h-2v-1h-4v1h-1v1h-1v4h-1v-4h1v-2h1v-1h1z" fill="#404040"/><path d="M4 2h4v1h1v1h1v4h-1v1h-1v1h-4v-1h-1v-1h-1v-4h1v-1h1z" fill="#fff"/><path d="M10 3h1v5h-1v2h-2v1h-4v-1h4v-1h1v-1h1z" fill="#d4d0c8"/></svg>
<div class="t" style="left:234px;top:531px;">1852m</div>
<svg style="left:283px;top:509px" width="12" height="12" shape-rendering="crispEdges"><path d="M4 0h4v1h2v1h1v2h1v4h-1v2h-1v1h-2v1h-4v-1h-2v-1h-1v-2h-1v-4h1v-2h1v-1h2z" fill="#fff"/><path d="M4 0h4v1h-4v1h-2v2h-1v4h-1v-4h1v-2h1v-1h2z" fill="#808080"/><path d="M4 1h4v1h2v1h-2v-1h-4v1h-1v1h-1v4h-1v-4h1v-2h1v-1h1z" fill="#404040"/><path d="M4 2h4v1h1v1h1v4h-1v1h-1v1h-4v-1h-1v-1h-1v-4h1v-1h1z" fill="#fff"/><path d="M10 3h1v5h-1v2h-2v1h-4v-1h4v-1h1v-1h1z" fill="#d4d0c8"/></svg>
<div class="t" style="left:300px;top:509px;">12hrs</div>
<svg style="left:283px;top:531px" width="12" height="12" shape-rendering="crispEdges"><path d="M4 0h4v1h2v1h1v2h1v4h-1v2h-1v1h-2v1h-4v-1h-2v-1h-1v-2h-1v-4h1v-2h1v-1h2z" fill="#fff"/><path d="M4 0h4v1h-4v1h-2v2h-1v4h-1v-4h1v-2h1v-1h2z" fill="#808080"/><path d="M4 1h4v1h2v1h-2v-1h-4v1h-1v1h-1v4h-1v-4h1v-2h1v-1h1z" fill="#404040"/><path d="M4 2h4v1h1v1h1v4h-1v1h-1v1h-4v-1h-1v-1h-1v-4h1v-1h1z" fill="#fff"/><path d="M10 3h1v5h-1v2h-2v1h-4v-1h4v-1h1v-1h1z" fill="#d4d0c8"/></svg>
<svg style="left:350px;top:509px" width="12" height="12" shape-rendering="crispEdges"><path d="M4 0h4v1h2v1h1v2h1v4h-1v2h-1v1h-2v1h-4v-1h-2v-1h-1v-2h-1v-4h1v-2h1v-1h2z" fill="#fff"/><path d="M4 0h4v1h-4v1h-2v2h-1v4h-1v-4h1v-2h1v-1h2z" fill="#808080"/><path d="M4 1h4v1h2v1h-2v-1h-4v1h-1v1h-1v4h-1v-4h1v-2h1v-1h1z" fill="#404040"/><path d="M4 2h4v1h1v1h1v4h-1v1h-1v1h-4v-1h-1v-1h-1v-4h1v-1h1z" fill="#fff"/><path d="M10 3h1v5h-1v2h-2v1h-4v-1h4v-1h1v-1h1z" fill="#d4d0c8"/></svg>
<div class="t" style="left:367px;top:509px;">24hrs</div>
<svg style="left:350px;top:531px" width="12" height="12" shape-rendering="crispEdges"><path d="M4 0h4v1h2v1h1v2h1v4h-1v2h-1v1h-2v1h-4v-1h-2v-1h-1v-2h-1v-4h1v-2h1v-1h2z" fill="#fff"/><path d="M4 0h4v1h-4v1h-2v2h-1v4h-1v-4h1v-2h1v-1h2z" fill="#808080"/><path d="M4 1h4v1h2v1h-2v-1h-4v1h-1v1h-1v4h-1v-4h1v-2h1v-1h1z" fill="#404040"/><path d="M4 2h4v1h1v1h1v4h-1v1h-1v1h-4v-1h-1v-1h-1v-4h1v-1h1z" fill="#fff"/><path d="M10 3h1v5h-1v2h-2v1h-4v-1h4v-1h1v-1h1z" fill="#d4d0c8"/></svg>
<svg style="left:13px;top:554px" width="12" height="12" shape-rendering="crispEdges"><path d="M4 0h4v1h2v1h1v2h1v4h-1v2h-1v1h-2v1h-4v-1h-2v-1h-1v-2h-1v-4h1v-2h1v-1h2z" fill="#fff"/><path d="M4 0h4v1h-4v1h-2v2h-1v4h-1v-4h1v-2h1v-1h2z" fill="#808080"/><path d="M4 1h4v1h2v1h-2v-1h-4v1h-1v1h-1v4h-1v-4h1v-2h1v-1h1z" fill="#404040"/><path d="M4 2h4v1h1v1h1v4h-1v1h-1v1h-4v-1h-1v-1h-1v-4h1v-1h1z" fill="#fff"/><path d="M10 3h1v5h-1v2h-2v1h-4v-1h4v-1h1v-1h1z" fill="#d4d0c8"/></svg>
<div class="t" style="left:30px;top:554px;">@250</div>
<svg style="left:77px;top:554px" width="12" height="12" shape-rendering="crispEdges"><path d="M4 0h4v1h2v1h1v2h1v4h-1v2h-1v1h-2v1h-4v-1h-2v-1h-1v-2h-1v-4h1v-2h1v-1h2z" fill="#fff"/><path d="M4 0h4v1h-4v1h-2v2h-1v4h-1v-4h1v-2h1v-1h2z" fill="#808080"/><path d="M4 1h4v1h2v1h-2v-1h-4v1h-1v1h-1v4h-1v-4h1v-2h1v-1h1z" fill="#404040"/><path d="M4 2h4v1h1v1h1v4h-1v1h-1v1h-4v-1h-1v-1h-1v-4h1v-1h1z" fill="#fff"/><path d="M10 3h1v5h-1v2h-2v1h-4v-1h4v-1h1v-1h1z" fill="#d4d0c8"/><path d="M5 4h2v1h1v2h-1v1h-2v-1h-1v-2h1z" fill="#000"/></svg>
<div class="t" style="left:94px;top:554px;">@500</div>
<svg style="left:149px;top:554px" width="12" height="12" shape-rendering="crispEdges"><path d="M4 0h4v1h2v1h1v2h1v4h-1v2h-1v1h-2v1h-4v-1h-2v-1h-1v-2h-1v-4h1v-2h1v-1h2z" fill="#fff"/><path d="M4 0h4v1h-4v1h-2v2h-1v4h-1v-4h1v-2h1v-1h2z" fill="#808080"/><path d="M4 1h4v1h2v1h-2v-1h-4v1h-1v1h-1v4h-1v-4h1v-2h1v-1h1z" fill="#404040"/><path d="M4 2h4v1h1v1h1v4h-1v1h-1v1h-4v-1h-1v-1h-1v-4h1v-1h1z" fill="#fff"/><path d="M10 3h1v5h-1v2h-2v1h-4v-1h4v-1h1v-1h1z" fill="#d4d0c8"/></svg>
<div class="t" style="left:166px;top:554px;">@1km</div>
<svg style="left:217px;top:554px" width="12" height="12" shape-rendering="crispEdges"><path d="M4 0h4v1h2v1h1v2h1v4h-1v2h-1v1h-2v1h-4v-1h-2v-1h-1v-2h-1v-4h1v-2h1v-1h2z" fill="#fff"/><path d="M4 0h4v1h-4v1h-2v2h-1v4h-1v-4h1v-2h1v-1h2z" fill="#808080"/><path d="M4 1h4v1h2v1h-2v-1h-4v1h-1v1h-1v4h-1v-4h1v-2h1v-1h1z" fill="#404040"/><path d="M4 2h4v1h1v1h1v4h-1v1h-1v1h-4v-1h-1v-1h-1v-4h1v-1h1z" fill="#fff"/><path d="M10 3h1v5h-1v2h-2v1h-4v-1h4v-1h1v-1h1z" fill="#d4d0c8"/></svg>
<div class="t" style="left:234px;top:554px;">Maximum</div>
<svg style="left:350px;top:554px" width="12" height="12" shape-rendering="crispEdges"><path d="M4 0h4v1h2v1h1v2h1v4h-1v2h-1v1h-2v1h-4v-1h-2v-1h-1v-2h-1v-4h1v-2h1v-1h2z" fill="#fff"/><path d="M4 0h4v1h-4v1h-2v2h-1v4h-1v-4h1v-2h1v-1h2z" fill="#808080"/><path d="M4 1h4v1h2v1h-2v-1h-4v1h-1v1h-1v4h-1v-4h1v-2h1v-1h1z" fill="#404040"/><path d="M4 2h4v1h1v1h1v4h-1v1h-1v1h-4v-1h-1v-1h-1v-4h1v-1h1z" fill="#d4d0c8"/><path d="M10 3h1v5h-1v2h-2v1h-4v-1h4v-1h1v-1h1z" fill="#d4d0c8"/></svg>
<div class="t" style="left:368px;top:555px;color:#fff">Gates</div>
<div class="t" style="left:367px;top:554px;color:#808080">Gates</div>
<div style="left:297px;top:528px;width:45px;height:19px;background:#fff;box-shadow:inset 1px 1px #808080,inset -1px -1px #fff,inset 2px 2px #404040,inset -2px -2px #d4d0c8;"></div>
<div class="t" style="left:301px;top:531px;">1000m</div>
<div style="left:365px;top:528px;width:45px;height:19px;background:#fff;box-shadow:inset 1px 1px #808080,inset -1px -1px #fff,inset 2px 2px #404040,inset -2px -2px #d4d0c8;"></div>
<div class="t" style="left:369px;top:531px;">360min</div>
<div style="left:13px;top:577px;width:13px;height:13px;background:#fff;box-shadow:inset 1px 1px #808080,inset -1px -1px #fff,inset 2px 2px #404040,inset -2px -2px #d4d0c8;"></div>
<svg style="left:13px;top:577px" width="13" height="13"><path d="M3 5h1v1h1v1h1v-1h1v-1h1v-1h1v-1h1v3h-1v1h-1v1h-1v1h-1v1h-1v-1h-1v-1h-1v-1h-1z" fill="#000"/></svg>
<div class="t" style="left:30px;top:578px;">Doppler</div>
<div style="left:77px;top:577px;width:13px;height:13px;background:#d4d0c8;box-shadow:inset 1px 1px #808080,inset -1px -1px #fff,inset 2px 2px #404040,inset -2px -2px #d4d0c8;"></div>
<div class="t" style="left:95px;top:579px;color:#fff;">Projection</div>
<div class="t" style="left:94px;top:578px;color:#808080;">Projection</div>
<div style="left:149px;top:577px;width:13px;height:13px;background:#d4d0c8;box-shadow:inset 1px 1px #808080,inset -1px -1px #fff,inset 2px 2px #404040,inset -2px -2px #d4d0c8;"></div>
<div class="t" style="left:167px;top:579px;color:#fff;">Interpolation</div>
<div class="t" style="left:166px;top:578px;color:#808080;">Interpolation</div>
<div style="left:233px;top:577px;width:13px;height:13px;background:#fff;box-shadow:inset 1px 1px #808080,inset -1px -1px #fff,inset 2px 2px #404040,inset -2px -2px #d4d0c8;"></div>
<div class="t" style="left:250px;top:578px;">Altitude</div>
<div style="left:295px;top:577px;width:13px;height:13px;background:#d4d0c8;box-shadow:inset 1px 1px #808080,inset -1px -1px #fff,inset 2px 2px #404040,inset -2px -2px #d4d0c8;"></div>
<div class="t" style="left:313px;top:579px;color:#fff;overflow:hidden;width:42px;">Constrain</div>
<div class="t" style="left:312px;top:578px;color:#808080;overflow:hidden;width:42px;">Constrain</div>
<div style="left:363px;top:577px;width:13px;height:13px;background:#d4d0c8;box-shadow:inset 1px 1px #808080,inset -1px -1px #fff,inset 2px 2px #404040,inset -2px -2px #d4d0c8;"></div>
<svg style="left:363px;top:577px" width="13" height="13"><path d="M3 5h1v1h1v1h1v-1h1v-1h1v-1h1v-1h1v3h-1v1h-1v1h-1v1h-1v1h-1v-1h-1v-1h-1v-1h-1z" fill="#808080"/></svg>
<div class="t" style="left:381px;top:579px;color:#fff;">1/Leg</div>
<div class="t" style="left:380px;top:578px;color:#808080;">1/Leg</div>
<div style="left:6px;top:598px;width:410px;height:124px;background:#fff;box-shadow:inset 1px 1px #808080,inset -1px -1px #fff,inset 2px 2px #404040,inset -2px -2px #d4d0c8"></div>
<div style="left:8px;top:600px;width:28px;height:19px;background:#d4d0c8;box-shadow:inset -1px 0 #000,inset 1px 1px #fff"></div>
<div class="t" style="left:12px;top:605px;">#</div>
<div style="left:36px;top:600px;width:53px;height:19px;background:#d4d0c8;box-shadow:inset -1px 0 #000,inset 1px 1px #fff"></div>
<div class="t" style="left:39px;top:605px;">time</div>
<div style="left:89px;top:600px;width:45px;height:19px;background:#d4d0c8;box-shadow:inset -1px 0 #000,inset 1px 1px #fff"></div>
<div class="t" style="left:92px;top:605px;">[m]</div>
<div style="left:134px;top:600px;width:48px;height:19px;background:#d4d0c8;box-shadow:inset -1px 0 #000,inset 1px 1px #fff"></div>
<div class="t" style="left:137px;top:605px;">[knots]</div>
<div style="left:182px;top:600px;width:45px;height:19px;background:#d4d0c8;box-shadow:inset -1px 0 #000,inset 1px 1px #fff"></div>
<div class="t" style="left:185px;top:605px;">+/-</div>
<div style="left:227px;top:600px;width:45px;height:19px;background:#d4d0c8;box-shadow:inset -1px 0 #000,inset 1px 1px #fff"></div>
<div class="t" style="left:230px;top:605px;">mSDoP</div>
<div style="left:272px;top:600px;width:45px;height:19px;background:#d4d0c8;box-shadow:inset -1px 0 #000,inset 1px 1px #fff"></div>
<div class="t" style="left:275px;top:605px;">min</div>
<div style="left:317px;top:600px;width:45px;height:19px;background:#d4d0c8;box-shadow:inset -1px 0 #000,inset 1px 1px #fff"></div>
<div class="t" style="left:320px;top:605px;">max</div>
<div style="left:362px;top:600px;width:37px;height:19px;background:#d4d0c8;box-shadow:inset -1px 0 #000,inset 1px 1px #fff"></div>
<div class="t" style="left:365px;top:605px;">mSats</div>
<div style="left:8px;top:619px;width:391px;height:17px;background:#0a246a"></div>
<div style="left:35px;top:619px;width:1px;height:17px;background:#a6b8ec"></div>
<div style="left:88px;top:619px;width:1px;height:17px;background:#a6b8ec"></div>
<div style="left:133px;top:619px;width:1px;height:17px;background:#a6b8ec"></div>
<div style="left:181px;top:619px;width:1px;height:17px;background:#a6b8ec"></div>
<div style="left:226px;top:619px;width:1px;height:17px;background:#a6b8ec"></div>
<div style="left:271px;top:619px;width:1px;height:17px;background:#a6b8ec"></div>
<div style="left:316px;top:619px;width:1px;height:17px;background:#a6b8ec"></div>
<div style="left:361px;top:619px;width:1px;height:17px;background:#a6b8ec"></div>
<div class="t" style="left:11px;top:624px;color:#fff"> 1</div>
<div class="t" style="left:38px;top:624px;color:#fff">13:07:28</div>
<div class="t" style="left:91px;top:624px;color:#fff">497.4</div>
<div class="t" style="left:136px;top:624px;color:#fff">21.487</div>
<div class="t" style="left:184px;top:624px;color:#fff"> 0.638</div>
<div class="t" style="left:229px;top:624px;color:#fff"> 3.324</div>
<div class="t" style="left:274px;top:624px;color:#fff">10.458</div>
<div class="t" style="left:319px;top:624px;color:#fff">25.445</div>
<div class="t" style="left:364px;top:624px;color:#fff">8</div>
<div style="left:35px;top:636px;width:1px;height:17px;background:#d0d0d0"></div>
<div style="left:88px;top:636px;width:1px;height:17px;background:#d0d0d0"></div>
<div style="left:133px;top:636px;width:1px;height:17px;background:#d0d0d0"></div>
<div style="left:181px;top:636px;width:1px;height:17px;background:#d0d0d0"></div>
<div style="left:226px;top:636px;width:1px;height:17px;background:#d0d0d0"></div>
<div style="left:271px;top:636px;width:1px;height:17px;background:#d0d0d0"></div>
<div style="left:316px;top:636px;width:1px;height:17px;background:#d0d0d0"></div>
<div style="left:361px;top:636px;width:1px;height:17px;background:#d0d0d0"></div>
<div class="t" style="left:11px;top:641px;color:#000"> 2</div>
<div class="t" style="left:38px;top:641px;color:#000">14:05:29</div>
<div class="t" style="left:91px;top:641px;color:#000">434.6</div>
<div class="t" style="left:136px;top:641px;color:#000">21.120</div>
<div class="t" style="left:184px;top:641px;color:#000"> 0.316</div>
<div class="t" style="left:229px;top:641px;color:#000"> 1.691</div>
<div class="t" style="left:274px;top:641px;color:#000"> 9.233</div>
<div class="t" style="left:319px;top:641px;color:#000">31.471</div>
<div class="t" style="left:364px;top:641px;color:#000">8</div>
<div style="left:35px;top:653px;width:1px;height:17px;background:#d0d0d0"></div>
<div style="left:88px;top:653px;width:1px;height:17px;background:#d0d0d0"></div>
<div style="left:133px;top:653px;width:1px;height:17px;background:#d0d0d0"></div>
<div style="left:181px;top:653px;width:1px;height:17px;background:#d0d0d0"></div>
<div style="left:226px;top:653px;width:1px;height:17px;background:#d0d0d0"></div>
<div style="left:271px;top:653px;width:1px;height:17px;background:#d0d0d0"></div>
<div style="left:316px;top:653px;width:1px;height:17px;background:#d0d0d0"></div>
<div style="left:361px;top:653px;width:1px;height:17px;background:#d0d0d0"></div>
<div class="t" style="left:11px;top:658px;color:#000"> 3</div>
<div class="t" style="left:38px;top:658px;color:#000">13:18:08</div>
<div class="t" style="left:91px;top:658px;color:#000">490.7</div>
<div class="t" style="left:136px;top:658px;color:#000">20.734</div>
<div class="t" style="left:184px;top:658px;color:#000"> 0.517</div>
<div class="t" style="left:229px;top:658px;color:#000"> 2.197</div>
<div class="t" style="left:274px;top:658px;color:#000">12.149</div>
<div class="t" style="left:319px;top:658px;color:#000">28.050</div>
<div class="t" style="left:364px;top:658px;color:#000">8</div>
<div style="left:35px;top:670px;width:1px;height:17px;background:#d0d0d0"></div>
<div style="left:88px;top:670px;width:1px;height:17px;background:#d0d0d0"></div>
<div style="left:133px;top:670px;width:1px;height:17px;background:#d0d0d0"></div>
<div style="left:181px;top:670px;width:1px;height:17px;background:#d0d0d0"></div>
<div style="left:226px;top:670px;width:1px;height:17px;background:#d0d0d0"></div>
<div style="left:271px;top:670px;width:1px;height:17px;background:#d0d0d0"></div>
<div style="left:316px;top:670px;width:1px;height:17px;background:#d0d0d0"></div>
<div style="left:361px;top:670px;width:1px;height:17px;background:#d0d0d0"></div>
<div class="t" style="left:11px;top:675px;color:#000"> 4</div>
<div class="t" style="left:38px;top:675px;color:#000">13:58:48</div>
<div class="t" style="left:91px;top:675px;color:#000">238.0</div>
<div class="t" style="left:136px;top:675px;color:#000">20.115</div>
<div class="t" style="left:184px;top:675px;color:#000"> 0.395</div>
<div class="t" style="left:229px;top:675px;color:#000"> 1.438</div>
<div class="t" style="left:274px;top:675px;color:#000">13.043</div>
<div class="t" style="left:319px;top:675px;color:#000">27.000</div>
<div class="t" style="left:364px;top:675px;color:#000">8</div>
<div style="left:35px;top:687px;width:1px;height:17px;background:#d0d0d0"></div>
<div style="left:88px;top:687px;width:1px;height:17px;background:#d0d0d0"></div>
<div style="left:133px;top:687px;width:1px;height:17px;background:#d0d0d0"></div>
<div style="left:181px;top:687px;width:1px;height:17px;background:#d0d0d0"></div>
<div style="left:226px;top:687px;width:1px;height:17px;background:#d0d0d0"></div>
<div style="left:271px;top:687px;width:1px;height:17px;background:#d0d0d0"></div>
<div style="left:316px;top:687px;width:1px;height:17px;background:#d0d0d0"></div>
<div style="left:361px;top:687px;width:1px;height:17px;background:#d0d0d0"></div>
<div class="t" style="left:11px;top:692px;color:#000"> 5</div>
<div class="t" style="left:38px;top:692px;color:#000">13:09:20</div>
<div class="t" style="left:91px;top:692px;color:#000">112.4</div>
<div class="t" style="left:136px;top:692px;color:#000">18.207</div>
<div class="t" style="left:184px;top:692px;color:#000"> 0.296</div>
<div class="t" style="left:229px;top:692px;color:#000"> 1.030</div>
<div class="t" style="left:274px;top:692px;color:#000">11.197</div>
<div class="t" style="left:319px;top:692px;color:#000">29.974</div>
<div class="t" style="left:364px;top:692px;color:#000">8</div>
<div style="left:399px;top:619px;width:16px;height:85px;background-color:#fff;background-image:linear-gradient(45deg,#d4d0c8 25%,transparent 25%,transparent 75%,#d4d0c8 75%),linear-gradient(45deg,#d4d0c8 25%,transparent 25%,transparent 75%,#d4d0c8 75%);background-size:2px 2px;background-position:0 0,1px 1px"></div>
<div style="left:399px;top:600px;width:16px;height:16px;background:#d4d0c8;box-shadow:inset -1px -1px #404040,inset 1px 1px #fff,inset -2px -2px #808080,inset 2px 2px #d4d0c8;"></div>
<svg style="left:399px;top:600px" width="16" height="16" shape-rendering="crispEdges"><path transform="translate(-399 -600)" d="M406 606h1v1h1v1h1v1h1v1h-7v-1h1v-1h1v-1h1z" fill="#000"/></svg>
<div style="left:399px;top:616px;width:16px;height:36px;background:#d4d0c8;box-shadow:inset -1px -1px #404040,inset 1px 1px #fff,inset -2px -2px #808080,inset 2px 2px #d4d0c8;"></div>
<div style="left:399px;top:688px;width:16px;height:16px;background:#d4d0c8;box-shadow:inset -1px -1px #404040,inset 1px 1px #fff,inset -2px -2px #808080,inset 2px 2px #d4d0c8;"></div>
<svg style="left:399px;top:688px" width="16" height="16" shape-rendering="crispEdges"><path transform="translate(-399 -688)" d="M403 695h7v1h-1v1h-1v1h-1v1h-1v-1h-1v-1h-1v-1h-1z" fill="#000"/></svg>
<div style="left:8px;top:704px;width:391px;height:16px;background-color:#fff;background-image:linear-gradient(45deg,#d4d0c8 25%,transparent 25%,transparent 75%,#d4d0c8 75%),linear-gradient(45deg,#d4d0c8 25%,transparent 25%,transparent 75%,#d4d0c8 75%);background-size:2px 2px;background-position:0 0,1px 1px"></div>
<div style="left:8px;top:704px;width:16px;height:16px;background:#d4d0c8;box-shadow:inset -1px -1px #404040,inset 1px 1px #fff,inset -2px -2px #808080,inset 2px 2px #d4d0c8;"></div>
<svg style="left:8px;top:704px" width="16" height="16" shape-rendering="crispEdges"><path transform="translate(-8 -704)" d="M16 708h1v7h-1v-1h-1v-1h-1v-1h-1v-1h1v-1h1v-1h1z" fill="#000"/></svg>
<div style="left:24px;top:704px;width:293px;height:16px;background:#d4d0c8;box-shadow:inset -1px -1px #404040,inset 1px 1px #fff,inset -2px -2px #808080,inset 2px 2px #d4d0c8;"></div>
<div style="left:383px;top:704px;width:16px;height:16px;background:#d4d0c8;box-shadow:inset -1px -1px #404040,inset 1px 1px #fff,inset -2px -2px #808080,inset 2px 2px #d4d0c8;"></div>
<svg style="left:383px;top:704px" width="16" height="16" shape-rendering="crispEdges"><path transform="translate(-383 -704)" d="M390 708h1v1h1v1h1v1h1v1h-1v1h-1v1h-1v1h-1z" fill="#000"/></svg>
<div style="left:399px;top:704px;width:16px;height:16px;background:#d4d0c8"></div>
<div style="left:11px;top:727px;width:43px;height:18px;background:#d4d0c8;box-shadow:inset 1px 1px #808080,inset -1px -1px #fff,inset 2px 2px #404040,inset -2px -2px #d4d0c8;"></div>
<div class="t" style="left:20px;top:729px;">10</div>
<div style="left:38px;top:729px;width:15px;height:7px;background:#d4d0c8;box-shadow:inset -1px -1px #404040,inset 1px 1px #fff,inset -2px -2px #808080,inset 2px 2px #d4d0c8;"></div>
<div style="left:38px;top:736px;width:15px;height:7px;background:#d4d0c8;box-shadow:inset -1px -1px #404040,inset 1px 1px #fff,inset -2px -2px #808080,inset 2px 2px #d4d0c8;"></div>
<svg style="left:38px;top:729px" width="15" height="14" shape-rendering="crispEdges"><path d="M6 2h1v1h1v1h-3v-1h1z" fill="#000"/><path d="M5 9h3v1h-1v1h-1v-1h-1z" fill="#000"/></svg>
<div class="t" style="left:59px;top:729px;">rows</div>
<div class="t" style="left:103px;top:729px;">Avg 2:</div>
<div style="left:141px;top:727px;width:52px;height:18px;background:#d4d0c8;box-shadow:inset 1px 1px #808080,inset -1px -1px #fff;"></div>
<div class="t" style="left:144px;top:729px;">21.303</div>
<div class="t" style="left:209px;top:729px;">Avg 3:</div>
<div style="left:247px;top:727px;width:52px;height:18px;background:#d4d0c8;box-shadow:inset 1px 1px #808080,inset -1px -1px #fff;"></div>
<div class="t" style="left:250px;top:729px;">21.114</div>
<div class="t" style="left:315px;top:729px;">Avg 5:</div>
<div style="left:354px;top:727px;width:52px;height:18px;background:#d4d0c8;box-shadow:inset 1px 1px #808080,inset -1px -1px #fff;"></div>
<div class="t" style="left:357px;top:729px;">20.333</div>
<div style="left:0px;top:753px;width:1279px;height:1px;background:#fff"></div>
<div class="t" style="left:1px;top:758px;">Ready</div>
<div style="left:1189px;top:756px;width:26px;height:18px;box-shadow:inset 1px 1px #808080,inset -1px -1px #fff"></div>
<div style="left:1217px;top:756px;width:28px;height:18px;box-shadow:inset 1px 1px #808080,inset -1px -1px #fff"></div>
<div style="left:1247px;top:756px;width:32px;height:18px;box-shadow:inset 1px 1px #808080,inset -1px -1px #fff"></div>
<div style="left:419px;top:39px;width:3px;height:714px;background:linear-gradient(90deg,#e4e2dc,#f4f4f2,#e4e2dc)"></div>
<div style="left:423px;top:39px;width:853px;height:439px;background:#dcdcdc;border:1px solid #000"></div>
<div style="left:424px;top:40px;width:1px;height:437px;background:#f4f4f4"></div>
<svg style="left:0;top:0" width="1279" height="774" shape-rendering="crispEdges"><line x1="553.5" y1="40" x2="553.5" y2="477" stroke="#000" stroke-dasharray="3 3"/><line x1="681.5" y1="40" x2="681.5" y2="477" stroke="#000" stroke-dasharray="3 3"/><line x1="809.5" y1="40" x2="809.5" y2="477" stroke="#000" stroke-dasharray="3 3"/><line x1="938.5" y1="40" x2="938.5" y2="477" stroke="#000" stroke-dasharray="3 3"/><line x1="1066.5" y1="40" x2="1066.5" y2="477" stroke="#000" stroke-dasharray="3 3"/><line x1="1195.5" y1="40" x2="1195.5" y2="477" stroke="#000" stroke-dasharray="3 3"/><line x1="424" y1="169.5" x2="1275" y2="169.5" stroke="#000" stroke-dasharray="3 3"/><line x1="424" y1="297.5" x2="1275" y2="297.5" stroke="#000" stroke-dasharray="3 3"/><line x1="424" y1="426.5" x2="1275" y2="426.5" stroke="#000" stroke-dasharray="3 3"/></svg>
<svg style="left:0;top:0" width="1279" height="774"><g fill="none" stroke-linejoin="round" stroke-linecap="round"><polyline stroke="#3a0a0a" stroke-width="1.6" points="522,62 522,72"/><polyline stroke="#3a0a0a" stroke-width="1.4" points="522,62 541,65 537,69 525,71"/><polyline stroke="#3a0a0a" stroke-width="1.4" points="525,71 537,90"/><polyline stroke="#3a0a0a" stroke-width="1.4" points="529,75 529,93 537,91"/><polyline stroke="#e08848" stroke-width="1.5" points="537,91 545,93"/><polyline stroke="#e08848" stroke-width="1.6" points="545,93 552,99 566,105 588,111 610,119 633,126 657,131"/><polyline stroke="#f0e060" stroke-width="1.8" points="547,97 566,107 594,111 625,114 640,113 667,108 687,98 718,90"/><polyline stroke="#f4f0b8" stroke-width="1.7" points="678,85 680,90 672,96 649,107 625,118 600,130 576,144 553,156 522,171 490,182 459,190 442,194 437,197"/><polyline stroke="#ecb858" stroke-width="1.6" points="657,131 641,135 620,142 592,153 569,169 553,180 530,191 506,204 483,211 451,224 428,233 424,236"/><polyline stroke="#f0e060" stroke-width="1.8" points="437,197 451,197 462,199 483,205 506,207 530,211 553,219 584,230 616,241 644,246 680,244 720,248 748,250 761,249"/><polyline stroke="#f4f0b8" stroke-width="1.7" points="761,249 755,254 748,268 738,284 725,299 706,318 684,335 654,350 621,358 560,389 520,412 487,427"/><polyline stroke="#ecb858" stroke-width="1.6" points="424,236 436,232 459,235 483,241 514,247 554,259 588,264 622,272"/><polyline stroke="#f0e060" stroke-width="1.8" points="622,272 680,276 710,284 738,288 766,290 785,286"/><polyline stroke="#ecb858" stroke-width="1.6" points="785,286 763,297 729,313 691,326 654,339 641,343 600,357 588,360 554,375 529,388 511,390"/><polyline stroke="#f0e060" stroke-width="1.8" points="511,390 521,390 553,393 571,397 600,400 621,407 662,416 723,418 763,413 777,407"/><polyline stroke="#e08848" stroke-width="1.6" points="476,434 486,425 504,414 529,399 554,385 588,372 600,365 641,352 672,340"/><polyline stroke="#f0e060" stroke-width="1.8" points="672,340 691,329 710,324 738,322 757,318"/><polyline stroke="#e08848" stroke-width="1.6" points="757,318 766,315 781,309 790,308"/><polyline stroke="#f4f0b8" stroke-width="1.6" points="790,308 766,320 755,350 747,360 729,385 702,391 688,389"/><polyline stroke="#ecb858" stroke-width="1.6" points="689,369 733,356 743,360 753,370 767,377 784,378"/><polyline stroke="#f4f0b8" stroke-width="1.6" points="784,378 781,387 769,403 777,407"/><polyline stroke="#f0e060" stroke-width="1.9" points="487,426 554,426 600,422 641,418 737,416"/><polyline stroke="#ecb858" stroke-width="1.6" points="777,407 763,407 743,414 702,440 682,446 641,460 607,476"/><polyline stroke="#f4f0b8" stroke-width="1.6" points="487,428 529,429 554,436 600,438 621,446 682,451 723,458 753,467 804,468 810,470"/><polyline stroke="#f0e060" stroke-width="1.7" points="607,476 682,472 733,474 763,477"/><polyline stroke="#e08848" stroke-width="1.6" points="763,477 784,474 804,469 810,470"/><polyline stroke="#f0e060" stroke-width="2.0" points="544,41 570,44 594,47 617,51 641,60 664,65 676,67 712,73 748,78 766,78 802,70 838,64 861,63"/><polyline stroke="#f4f0b8" stroke-width="1.6" points="562,44 594,49 625,57 656,65 680,69 700,74 715,75 719,78"/><polyline stroke="#f4f0b8" stroke-width="1.7" points="681,72 712,82 730,86 766,80 811,72 861,68"/><polyline stroke="#e08848" stroke-width="1.6" points="678,85 694,86 718,90"/><polyline stroke="#ecb858" stroke-width="1.5" points="678,85 689,78"/><polyline stroke="#3a0a0a" stroke-width="1.8" points="476,435 484,427"/><polyline stroke="#a02010" stroke-width="1.3" points="714,89 718,90"/><polyline stroke="#a02010" stroke-width="1.3" points="654,130 658,131"/><polyline stroke="#a02010" stroke-width="1.3" points="757,248 761,249"/><polyline stroke="#a02010" stroke-width="1.3" points="781,286 785,286"/><polyline stroke="#a02010" stroke-width="1.3" points="786,308 790,308"/><polyline stroke="#a02010" stroke-width="1.3" points="780,377 784,378"/><polyline stroke="#a02010" stroke-width="1.3" points="806,469 810,470"/><polyline stroke="#a02010" stroke-width="1.3" points="570,43 576,44"/><circle cx="678" cy="85" r="2" stroke="#801010" stroke-width="1.2"/><path d="M611 382q3-3 12-3q5 0 8 2q6 0 11 1q1 2-1 3q-6 0-10 1q-8 1-14 0q-7-1-6-4z" stroke="#0a8a0a" stroke-width="1.6"/></g></svg>
<div class="t" style="left:644px;top:380px;font-weight:bold;font-size:14px;line-height:16px;color:#17a017">22.510</div>
<svg style="left:0;top:0" width="1279" height="774"><g fill="none" stroke="#202020" stroke-width="1"><circle cx="1192" cy="378" r="74"/><circle cx="1192" cy="378" r="49.5"/><circle cx="1192" cy="378" r="24.5"/><line x1="1117" y1="378.5" x2="1267" y2="378.5"/><line x1="1192.5" y1="303" x2="1192.5" y2="453"/></g></svg>
<div class="t" style="left:1208px;top:314px;width:20px;text-align:center;font-weight:bold;font-size:14px;line-height:16px;letter-spacing:-0.5px;color:#1a9a1a">04</div>
<div class="t" style="left:1226px;top:341px;width:20px;text-align:center;font-weight:bold;font-size:14px;line-height:16px;letter-spacing:-0.5px;color:#1a9a1a">08</div>
<div class="t" style="left:1156px;top:340px;width:20px;text-align:center;font-weight:bold;font-size:14px;line-height:16px;letter-spacing:-0.5px;color:#1a9a1a">26</div>
<div class="t" style="left:1139px;top:371px;width:20px;text-align:center;font-weight:bold;font-size:14px;line-height:16px;letter-spacing:-0.5px;color:#1a9a1a">15</div>
<div class="t" style="left:1190px;top:366px;width:20px;text-align:center;font-weight:bold;font-size:14px;line-height:16px;letter-spacing:-0.5px;color:#1a9a1a">17</div>
<div class="t" style="left:1157px;top:394px;width:20px;text-align:center;font-weight:bold;font-size:14px;line-height:16px;letter-spacing:-0.5px;color:#1a9a1a">09</div>
<div class="t" style="left:1214px;top:393px;width:20px;text-align:center;font-weight:bold;font-size:14px;line-height:16px;letter-spacing:-0.5px;color:#1a9a1a">28</div>
<div class="t" style="left:1140px;top:406px;width:20px;text-align:center;font-weight:bold;font-size:14px;line-height:16px;letter-spacing:-0.5px;color:#1a9a1a">24</div>
<div class="t" style="left:1228px;top:412px;width:20px;text-align:center;font-weight:bold;font-size:14px;line-height:16px;letter-spacing:-0.5px;color:#1a9a1a">01</div>
<div class="t" style="left:1226px;top:426px;width:20px;text-align:center;font-weight:bold;font-size:14px;line-height:16px;letter-spacing:-0.5px;color:#c01010">11</div>
<div class="t" style="left:1034px;top:459px;font-weight:bold;font-size:14px;line-height:16px;letter-spacing:-0.3px;color:#000">3D</div>
<div class="t" style="left:1056.0px;top:459px;font-weight:bold;font-size:14px;line-height:16px;letter-spacing:-0.5px;color:#1a9a1a">17</div>
<div class="t" style="left:1076.2px;top:459px;font-weight:bold;font-size:14px;line-height:16px;letter-spacing:-0.5px;color:#1a9a1a">09</div>
<div class="t" style="left:1096.4px;top:459px;font-weight:bold;font-size:14px;line-height:16px;letter-spacing:-0.5px;color:#1a9a1a">26</div>
<div class="t" style="left:1116.6px;top:459px;font-weight:bold;font-size:14px;line-height:16px;letter-spacing:-0.5px;color:#1a9a1a">28</div>
<div class="t" style="left:1136.8px;top:459px;font-weight:bold;font-size:14px;line-height:16px;letter-spacing:-0.5px;color:#1a9a1a">15</div>
<div class="t" style="left:1157.0px;top:459px;font-weight:bold;font-size:14px;line-height:16px;letter-spacing:-0.5px;color:#1a9a1a">08</div>
<div class="t" style="left:1177.2px;top:459px;font-weight:bold;font-size:14px;line-height:16px;letter-spacing:-0.5px;color:#1a9a1a">24</div>
<div class="t" style="left:1197.4px;top:459px;font-weight:bold;font-size:14px;line-height:16px;letter-spacing:-0.5px;color:#1a9a1a">04</div>
<div class="t" style="left:1217.6px;top:459px;font-weight:bold;font-size:14px;line-height:16px;letter-spacing:-0.5px;color:#1a9a1a">01</div>
<div class="t" style="left:1237.8px;top:459px;font-weight:bold;font-size:14px;line-height:16px;letter-spacing:-0.5px;color:#c01010">11</div>
<div class="t" style="left:1258.0px;top:459px;font-weight:bold;font-size:14px;line-height:16px;letter-spacing:-0.5px;color:#c01010">12</div>
<div style="left:860px;top:56px;width:269px;height:378px;background:#d4d0c8;box-shadow:inset -1px -1px #404040,inset 1px 1px #d4d0c8,inset -2px -2px #808080,inset 2px 2px #fff"></div>
<div style="left:863px;top:59px;width:263px;height:18px;background:linear-gradient(90deg,#0a246a,#a6caf0)"></div>
<div class="t" style="left:864px;top:62px;font-weight:bold;color:#fff;letter-spacing:0.3px">Filter Settings</div>
<div style="left:1108px;top:61px;width:16px;height:14px;background:#d4d0c8;box-shadow:inset -1px -1px #404040,inset 1px 1px #fff,inset -2px -2px #808080,inset 2px 2px #d4d0c8;"></div>
<svg style="left:1108px;top:61px" width="16" height="14" shape-rendering="crispEdges"><path d="M4 3h2v1h1v1h1v-1h1v-1h2v1h-1v1h-1v1h-1v1h1v1h1v1h1v1h-2v-1h-1v-1h-1v1h-1v1h-2v-1h1v-1h1v-1h1v-1h-1v-1h-1v-1h-1z" fill="#000"/></svg>
<div class="t" style="left:873px;top:94px;">minimum speed [knots]:</div>
<div class="t" style="left:873px;top:120px;">maximum speed error [knots]:</div>
<div class="t" style="left:873px;top:146px;">maximum acceleration [m/s²]:</div>
<div class="t" style="left:873px;top:172px;">maximum HDoP:</div>
<div class="t" style="left:873px;top:201px;">minimum number of satellites:</div>
<div class="t" style="left:873px;top:230px;">Alpha radius [m]:</div>
<div style="left:1061px;top:90px;width:52px;height:18px;background:#d4d0c8;box-shadow:inset 1px 1px #808080,inset -1px -1px #fff;"></div>
<div style="left:1062px;top:91px;width:50px;height:16px;box-shadow:inset 1px 1px #404040"></div>
<div style="left:1096px;top:92px;width:15px;height:7px;background:#d4d0c8;box-shadow:inset -1px -1px #404040,inset 1px 1px #fff,inset -2px -2px #808080,inset 2px 2px #d4d0c8;"></div>
<div style="left:1096px;top:99px;width:15px;height:7px;background:#d4d0c8;box-shadow:inset -1px -1px #404040,inset 1px 1px #fff,inset -2px -2px #808080,inset 2px 2px #d4d0c8;"></div>
<svg style="left:1096px;top:92px" width="15" height="14" shape-rendering="crispEdges"><path d="M6 2h1v1h1v1h-3v-1h1z" fill="#000"/><path d="M5 9h3v1h-1v1h-1v-1h-1z" fill="#000"/></svg>
<div style="left:1076px;top:94px;width:7px;height:12px;background:#0a246a"></div>
<div class="t" style="left:1063px;top:93px;width:34px;text-align:center;color:#fff">0</div>
<div style="left:1061px;top:116px;width:52px;height:18px;background:#d4d0c8;box-shadow:inset 1px 1px #808080,inset -1px -1px #fff;"></div>
<div style="left:1062px;top:117px;width:50px;height:16px;box-shadow:inset 1px 1px #404040"></div>
<div style="left:1096px;top:118px;width:15px;height:7px;background:#d4d0c8;box-shadow:inset -1px -1px #404040,inset 1px 1px #fff,inset -2px -2px #808080,inset 2px 2px #d4d0c8;"></div>
<div style="left:1096px;top:125px;width:15px;height:7px;background:#d4d0c8;box-shadow:inset -1px -1px #404040,inset 1px 1px #fff,inset -2px -2px #808080,inset 2px 2px #d4d0c8;"></div>
<svg style="left:1096px;top:118px" width="15" height="14" shape-rendering="crispEdges"><path d="M6 2h1v1h1v1h-3v-1h1z" fill="#000"/><path d="M5 9h3v1h-1v1h-1v-1h-1z" fill="#000"/></svg>
<div class="t" style="left:1063px;top:119px;width:34px;text-align:center">1.5</div>
<div style="left:1061px;top:142px;width:52px;height:18px;background:#d4d0c8;box-shadow:inset 1px 1px #808080,inset -1px -1px #fff;"></div>
<div style="left:1062px;top:143px;width:50px;height:16px;box-shadow:inset 1px 1px #404040"></div>
<div style="left:1096px;top:144px;width:15px;height:7px;background:#d4d0c8;box-shadow:inset -1px -1px #404040,inset 1px 1px #fff,inset -2px -2px #808080,inset 2px 2px #d4d0c8;"></div>
<div style="left:1096px;top:151px;width:15px;height:7px;background:#d4d0c8;box-shadow:inset -1px -1px #404040,inset 1px 1px #fff,inset -2px -2px #808080,inset 2px 2px #d4d0c8;"></div>
<svg style="left:1096px;top:144px" width="15" height="14" shape-rendering="crispEdges"><path d="M6 2h1v1h1v1h-3v-1h1z" fill="#000"/><path d="M5 9h3v1h-1v1h-1v-1h-1z" fill="#000"/></svg>
<div class="t" style="left:1063px;top:145px;width:34px;text-align:center">5.0</div>
<div style="left:1061px;top:168px;width:52px;height:18px;background:#d4d0c8;box-shadow:inset 1px 1px #808080,inset -1px -1px #fff;"></div>
<div style="left:1062px;top:169px;width:50px;height:16px;box-shadow:inset 1px 1px #404040"></div>
<div style="left:1096px;top:170px;width:15px;height:7px;background:#d4d0c8;box-shadow:inset -1px -1px #404040,inset 1px 1px #fff,inset -2px -2px #808080,inset 2px 2px #d4d0c8;"></div>
<div style="left:1096px;top:177px;width:15px;height:7px;background:#d4d0c8;box-shadow:inset -1px -1px #404040,inset 1px 1px #fff,inset -2px -2px #808080,inset 2px 2px #d4d0c8;"></div>
<svg style="left:1096px;top:170px" width="15" height="14" shape-rendering="crispEdges"><path d="M6 2h1v1h1v1h-3v-1h1z" fill="#000"/><path d="M5 9h3v1h-1v1h-1v-1h-1z" fill="#000"/></svg>
<div class="t" style="left:1063px;top:171px;width:34px;text-align:center">5</div>
<div style="left:1061px;top:198px;width:52px;height:18px;background:#d4d0c8;box-shadow:inset 1px 1px #808080,inset -1px -1px #fff;"></div>
<div style="left:1062px;top:199px;width:50px;height:16px;box-shadow:inset 1px 1px #404040"></div>
<div style="left:1096px;top:200px;width:15px;height:7px;background:#d4d0c8;box-shadow:inset -1px -1px #404040,inset 1px 1px #fff,inset -2px -2px #808080,inset 2px 2px #d4d0c8;"></div>
<div style="left:1096px;top:207px;width:15px;height:7px;background:#d4d0c8;box-shadow:inset -1px -1px #404040,inset 1px 1px #fff,inset -2px -2px #808080,inset 2px 2px #d4d0c8;"></div>
<svg style="left:1096px;top:200px" width="15" height="14" shape-rendering="crispEdges"><path d="M6 2h1v1h1v1h-3v-1h1z" fill="#000"/><path d="M5 9h3v1h-1v1h-1v-1h-1z" fill="#000"/></svg>
<div class="t" style="left:1063px;top:201px;width:34px;text-align:center">5</div>
<div style="left:1061px;top:227px;width:52px;height:18px;background:#d4d0c8;box-shadow:inset 1px 1px #808080,inset -1px -1px #fff;"></div>
<div style="left:1062px;top:228px;width:50px;height:16px;box-shadow:inset 1px 1px #404040"></div>
<div style="left:1096px;top:229px;width:15px;height:7px;background:#d4d0c8;box-shadow:inset -1px -1px #404040,inset 1px 1px #fff,inset -2px -2px #808080,inset 2px 2px #d4d0c8;"></div>
<div style="left:1096px;top:236px;width:15px;height:7px;background:#d4d0c8;box-shadow:inset -1px -1px #404040,inset 1px 1px #fff,inset -2px -2px #808080,inset 2px 2px #d4d0c8;"></div>
<svg style="left:1096px;top:229px" width="15" height="14" shape-rendering="crispEdges"><path d="M6 2h1v1h1v1h-3v-1h1z" fill="#000"/><path d="M5 9h3v1h-1v1h-1v-1h-1z" fill="#000"/></svg>
<div class="t" style="left:1063px;top:230px;width:34px;text-align:center">50</div>
<div class="t" style="left:873px;top:260px;">UBX_Doppler:</div>
<svg style="left:954px;top:260px" width="12" height="12" shape-rendering="crispEdges"><path d="M4 0h4v1h2v1h1v2h1v4h-1v2h-1v1h-2v1h-4v-1h-2v-1h-1v-2h-1v-4h1v-2h1v-1h2z" fill="#fff"/><path d="M4 0h4v1h-4v1h-2v2h-1v4h-1v-4h1v-2h1v-1h2z" fill="#808080"/><path d="M4 1h4v1h2v1h-2v-1h-4v1h-1v1h-1v4h-1v-4h1v-2h1v-1h1z" fill="#404040"/><path d="M4 2h4v1h1v1h1v4h-1v1h-1v1h-4v-1h-1v-1h-1v-4h1v-1h1z" fill="#d4d0c8"/><path d="M10 3h1v5h-1v2h-2v1h-4v-1h4v-1h1v-1h1z" fill="#d4d0c8"/><path d="M5 4h2v1h1v2h-1v1h-2v-1h-1v-2h1z" fill="#808080"/></svg>
<div class="t" style="left:971px;top:261px;color:#fff">U112</div>
<div class="t" style="left:970px;top:260px;color:#808080">U112</div>
<svg style="left:1011px;top:260px" width="12" height="12" shape-rendering="crispEdges"><path d="M4 0h4v1h2v1h1v2h1v4h-1v2h-1v1h-2v1h-4v-1h-2v-1h-1v-2h-1v-4h1v-2h1v-1h2z" fill="#fff"/><path d="M4 0h4v1h-4v1h-2v2h-1v4h-1v-4h1v-2h1v-1h2z" fill="#808080"/><path d="M4 1h4v1h2v1h-2v-1h-4v1h-1v1h-1v4h-1v-4h1v-2h1v-1h1z" fill="#404040"/><path d="M4 2h4v1h1v1h1v4h-1v1h-1v1h-4v-1h-1v-1h-1v-4h1v-1h1z" fill="#d4d0c8"/><path d="M10 3h1v5h-1v2h-2v1h-4v-1h4v-1h1v-1h1z" fill="#d4d0c8"/></svg>
<div class="t" style="left:1028px;top:261px;color:#fff">U111</div>
<div class="t" style="left:1027px;top:260px;color:#808080">U111</div>
<svg style="left:1068px;top:260px" width="12" height="12" shape-rendering="crispEdges"><path d="M4 0h4v1h2v1h1v2h1v4h-1v2h-1v1h-2v1h-4v-1h-2v-1h-1v-2h-1v-4h1v-2h1v-1h2z" fill="#fff"/><path d="M4 0h4v1h-4v1h-2v2h-1v4h-1v-4h1v-2h1v-1h2z" fill="#808080"/><path d="M4 1h4v1h2v1h-2v-1h-4v1h-1v1h-1v4h-1v-4h1v-2h1v-1h1z" fill="#404040"/><path d="M4 2h4v1h1v1h1v4h-1v1h-1v1h-4v-1h-1v-1h-1v-4h1v-1h1z" fill="#d4d0c8"/><path d="M10 3h1v5h-1v2h-2v1h-4v-1h4v-1h1v-1h1z" fill="#d4d0c8"/></svg>
<div class="t" style="left:1085px;top:261px;color:#fff">U106</div>
<div class="t" style="left:1084px;top:260px;color:#808080">U106</div>
<div class="t" style="left:873px;top:289px;">error propagation:</div>
<svg style="left:981px;top:289px" width="12" height="12" shape-rendering="crispEdges"><path d="M4 0h4v1h2v1h1v2h1v4h-1v2h-1v1h-2v1h-4v-1h-2v-1h-1v-2h-1v-4h1v-2h1v-1h2z" fill="#fff"/><path d="M4 0h4v1h-4v1h-2v2h-1v4h-1v-4h1v-2h1v-1h2z" fill="#808080"/><path d="M4 1h4v1h2v1h-2v-1h-4v1h-1v1h-1v4h-1v-4h1v-2h1v-1h1z" fill="#404040"/><path d="M4 2h4v1h1v1h1v4h-1v1h-1v1h-4v-1h-1v-1h-1v-4h1v-1h1z" fill="#fff"/><path d="M10 3h1v5h-1v2h-2v1h-4v-1h4v-1h1v-1h1z" fill="#d4d0c8"/><path d="M5 4h2v1h1v2h-1v1h-2v-1h-1v-2h1z" fill="#000"/></svg>
<div class="t" style="left:998px;top:289px;">Average</div>
<svg style="left:1049px;top:289px" width="12" height="12" shape-rendering="crispEdges"><path d="M4 0h4v1h2v1h1v2h1v4h-1v2h-1v1h-2v1h-4v-1h-2v-1h-1v-2h-1v-4h1v-2h1v-1h2z" fill="#fff"/><path d="M4 0h4v1h-4v1h-2v2h-1v4h-1v-4h1v-2h1v-1h2z" fill="#808080"/><path d="M4 1h4v1h2v1h-2v-1h-4v1h-1v1h-1v4h-1v-4h1v-2h1v-1h1z" fill="#404040"/><path d="M4 2h4v1h1v1h1v4h-1v1h-1v1h-4v-1h-1v-1h-1v-4h1v-1h1z" fill="#fff"/><path d="M10 3h1v5h-1v2h-2v1h-4v-1h4v-1h1v-1h1z" fill="#d4d0c8"/></svg>
<div class="t" style="left:1066px;top:289px;">Gaussian</div>
<div style="left:874px;top:315px;width:241px;height:19px;background:#fff;box-shadow:inset 1px 1px #808080,inset -1px -1px #fff,inset 2px 2px #404040,inset -2px -2px #d4d0c8;"></div>
<div class="t" style="left:878px;top:318px;">cubic spline integration (10/20s Doppler)</div>
<div style="left:1098px;top:317px;width:15px;height:15px;background:#d4d0c8;box-shadow:inset -1px -1px #404040,inset 1px 1px #fff,inset -2px -2px #808080,inset 2px 2px #d4d0c8;"></div>
<svg style="left:1098px;top:317px" width="15" height="15" shape-rendering="crispEdges"><path d="M4 6h7v1h-1v1h-1v1h-1v1h-1v-1h-1v-1h-1v-1h-1z" fill="#000"/></svg>
<div class="t" style="left:873px;top:348px;">number of averages for ranking:</div>
<div style="left:1061px;top:346px;width:52px;height:18px;background:#d4d0c8;box-shadow:inset 1px 1px #808080,inset -1px -1px #fff;"></div>
<div style="left:1062px;top:347px;width:50px;height:16px;box-shadow:inset 1px 1px #404040"></div>
<div style="left:1096px;top:348px;width:15px;height:7px;background:#d4d0c8;box-shadow:inset -1px -1px #404040,inset 1px 1px #fff,inset -2px -2px #808080,inset 2px 2px #d4d0c8;"></div>
<div style="left:1096px;top:355px;width:15px;height:7px;background:#d4d0c8;box-shadow:inset -1px -1px #404040,inset 1px 1px #fff,inset -2px -2px #808080,inset 2px 2px #d4d0c8;"></div>
<svg style="left:1096px;top:348px" width="15" height="14" shape-rendering="crispEdges"><path d="M6 2h1v1h1v1h-3v-1h1z" fill="#000"/><path d="M5 9h3v1h-1v1h-1v-1h-1z" fill="#000"/></svg>
<div class="t" style="left:1063px;top:349px;width:34px;text-align:center">2</div>
<div class="t" style="left:873px;top:377px;">split file into segments [h]</div>
<div style="left:1061px;top:375px;width:52px;height:18px;background:#d4d0c8;box-shadow:inset 1px 1px #808080,inset -1px -1px #fff;"></div>
<div style="left:1062px;top:376px;width:50px;height:16px;box-shadow:inset 1px 1px #404040"></div>
<div style="left:1096px;top:377px;width:15px;height:7px;background:#d4d0c8;box-shadow:inset -1px -1px #404040,inset 1px 1px #fff,inset -2px -2px #808080,inset 2px 2px #d4d0c8;"></div>
<div style="left:1096px;top:384px;width:15px;height:7px;background:#d4d0c8;box-shadow:inset -1px -1px #404040,inset 1px 1px #fff,inset -2px -2px #808080,inset 2px 2px #d4d0c8;"></div>
<svg style="left:1096px;top:377px" width="15" height="14" shape-rendering="crispEdges"><path d="M6 2h1v1h1v1h-3v-1h1z" fill="#000"/><path d="M5 9h3v1h-1v1h-1v-1h-1z" fill="#000"/></svg>
<div class="t" style="left:1063px;top:378px;width:34px;text-align:center">2</div>
<div style="left:874px;top:403px;width:90px;height:23px;background:#d4d0c8;box-shadow:inset -1px -1px #404040,inset 1px 1px #fff,inset -2px -2px #808080,inset 2px 2px #d4d0c8;"></div>
<div class="t" style="left:903px;top:408px;">Cancel</div>
<div style="left:1025px;top:403px;width:90px;height:23px;border:1px solid #000"></div>
<div style="left:1026px;top:404px;width:88px;height:21px;background:#d4d0c8;box-shadow:inset -1px -1px #404040,inset 1px 1px #fff,inset -2px -2px #808080,inset 2px 2px #d4d0c8;"></div>
<div class="t" style="left:1062px;top:408px;">OK</div>
<div style="left:423px;top:480px;width:853px;height:210px;background:#dcdcdc;border:1px solid #000"></div>
<div style="left:613px;top:481px;width:439px;height:208px;background:#00c8c8"></div>
<svg style="left:0;top:0" width="1279" height="774" shape-rendering="crispEdges"><line x1="424" y1="508.5" x2="1275" y2="508.5" stroke="#000" stroke-dasharray="18 6"/><line x1="424" y1="569.5" x2="1275" y2="569.5" stroke="#000" stroke-dasharray="18 6"/><line x1="424" y1="629.5" x2="1275" y2="629.5" stroke="#000" stroke-dasharray="18 6"/><line x1="424" y1="539.5" x2="1275" y2="539.5" stroke="#000" stroke-dasharray="3 3"/><line x1="424" y1="599.5" x2="1275" y2="599.5" stroke="#000" stroke-dasharray="3 3"/><line x1="424" y1="660.5" x2="1275" y2="660.5" stroke="#000" stroke-dasharray="3 3"/><line x1="618.5" y1="481" x2="618.5" y2="689" stroke="#000" stroke-dasharray="3 3"/><line x1="774.5" y1="481" x2="774.5" y2="689" stroke="#000" stroke-dasharray="3 3"/></svg>
<div class="t" style="left:425px;top:507px;font-weight:bold;font-size:14px;line-height:16px;color:#000">30</div>
<div class="t" style="left:425px;top:568px;font-weight:bold;font-size:14px;line-height:16px;color:#000">20</div>
<div class="t" style="left:425px;top:629px;font-weight:bold;font-size:14px;line-height:16px;color:#000">10</div>
<div class="t" style="left:757px;top:479px;font-weight:bold;font-size:13px;line-height:15px;color:#000">13:07</div>
<svg style="left:0;top:0" width="1279" height="774"><g fill="none"><polyline points="424.5,570.5 461.5,567.5 474.5,570.5 499.5,575.5 534.5,574.5 539.5,577.5 556.5,575.5 588.5,572.5 596.5,562.5 610.5,552.5 613.5,550.5" stroke="#a08868" stroke-width="1" stroke-dasharray="3 2"/><polyline points="424.5,576.5 461.5,573.5 474.5,576.5 499.5,581.5 534.5,580.5 539.5,583.5 556.5,581.5 588.5,578.5 596.5,568.5 610.5,558.5 613.5,556.5" stroke="#a08868" stroke-width="1" stroke-dasharray="3 2"/><polyline points="424.5,573.5 461.5,570.5 474.5,573.5 499.5,578.5 534.5,577.5 539.5,580.5 556.5,578.5 588.5,575.5 596.5,565.5 610.5,555.5 613.5,553.5" stroke="#f2d888" stroke-width="1.5"/><polyline points="613.5,550.5 619.5,549.5 638.5,552.5 685.5,537.5 696.5,543.5 745.5,543.5 756.5,532.5 764.5,535.5 775.5,546.5" stroke="#f0fff8" stroke-width="1" stroke-dasharray="3 2"/><polyline points="613.5,556.5 619.5,555.5 638.5,558.5 685.5,543.5 696.5,549.5 745.5,549.5 756.5,538.5 764.5,541.5 775.5,552.5" stroke="#f0fff8" stroke-width="1" stroke-dasharray="3 2"/><polyline points="613.5,553.5 619.5,552.5 638.5,555.5 685.5,540.5 696.5,546.5 745.5,546.5 756.5,535.5 764.5,538.5 775.5,549.5" stroke="#d8f890" stroke-width="1.3"/><polyline points="823.5,623.5 849.5,596.5 874.5,569.5 900.5,557.5 909.5,553.5 950.5,546.5 984.5,553.5 1012.5,546.5 1039.5,541.5 1051.5,542.5" stroke="#f0fff8" stroke-width="1" stroke-dasharray="3 2"/><polyline points="823.5,629.5 849.5,602.5 874.5,575.5 900.5,563.5 909.5,559.5 950.5,552.5 984.5,559.5 1012.5,552.5 1039.5,547.5 1051.5,548.5" stroke="#f0fff8" stroke-width="1" stroke-dasharray="3 2"/><polyline points="823.5,626.5 849.5,599.5 874.5,572.5 900.5,560.5 909.5,556.5 950.5,549.5 984.5,556.5 1012.5,549.5 1039.5,544.5 1051.5,545.5" stroke="#d8f090" stroke-width="1.3"/><polyline points="1051.5,542.5 1053.5,542.5 1097.5,541.5 1125.5,537.5 1156.5,537.5 1183.5,540.5 1211.5,540.5 1235.5,542.5 1270.5,547.5" stroke="#707050" stroke-width="1" stroke-dasharray="3 2"/><polyline points="1051.5,548.5 1053.5,548.5 1097.5,547.5 1125.5,543.5 1156.5,543.5 1183.5,546.5 1211.5,546.5 1235.5,548.5 1270.5,553.5" stroke="#707050" stroke-width="1" stroke-dasharray="3 2"/><polyline points="1051.5,545.5 1053.5,545.5 1097.5,544.5 1125.5,540.5 1156.5,540.5 1183.5,543.5 1211.5,543.5 1235.5,545.5 1270.5,550.5" stroke="#ecec68" stroke-width="1.6"/><polyline points="780,539 787,542 792,552 804,569 814,574 817,587 824,617 829,619 844,607" stroke="#f0fff8" stroke-width="1" stroke-dasharray="3 2"/><polyline points="774,556 785,562 792,579 804,606 814,614 823,634 827,629 848,608" stroke="#f0fff8" stroke-width="1" stroke-dasharray="3 2"/><polyline points="814,592 823,626 849,599" stroke="#404858" stroke-width="1.3"/><polyline points="424.5,635.5 620.5,635.5 627.5,640.5 635.5,635.5 808.5,635.5 814.5,640.5 820.5,635.5 856.5,635.5 862.5,640.5 868.5,635.5 963.5,635.5 969.5,640.5 975.5,635.5 1270.5,635.5" stroke="#20a020" stroke-width="1.2"/></g></svg>
<div style="left:424px;top:699px;width:852px;height:51px;border:1px solid #fff"></div>
<div style="left:423px;top:698px;width:852px;height:51px;border:1px solid #808080"></div>
<div style="left:430px;top:692px;width:42px;height:13px;background:#d4d0c8"></div>
<div class="t" style="left:432px;top:693px;">Display</div>
<div style="left:430px;top:709px;width:13px;height:13px;background:#fff;box-shadow:inset 1px 1px #808080,inset -1px -1px #fff,inset 2px 2px #404040,inset -2px -2px #d4d0c8;"></div>
<svg style="left:430px;top:709px" width="13" height="13"><path d="M3 5h1v1h1v1h1v-1h1v-1h1v-1h1v-1h1v3h-1v1h-1v1h-1v1h-1v1h-1v-1h-1v-1h-1v-1h-1z" fill="#000"/></svg>
<div class="t" style="left:449px;top:710px;">Tracks</div>
<div style="left:485px;top:709px;width:13px;height:13px;background:#fff;box-shadow:inset 1px 1px #808080,inset -1px -1px #fff,inset 2px 2px #404040,inset -2px -2px #d4d0c8;"></div>
<div class="t" style="left:502px;top:710px;">Pnts</div>
<div style="left:529px;top:709px;width:13px;height:13px;background:#fff;box-shadow:inset 1px 1px #808080,inset -1px -1px #fff,inset 2px 2px #404040,inset -2px -2px #d4d0c8;"></div>
<svg style="left:529px;top:709px" width="13" height="13"><path d="M3 5h1v1h1v1h1v-1h1v-1h1v-1h1v-1h1v3h-1v1h-1v1h-1v1h-1v1h-1v-1h-1v-1h-1v-1h-1z" fill="#000"/></svg>
<div class="t" style="left:547px;top:710px;">SDoP</div>
<div style="left:581px;top:709px;width:13px;height:13px;background:#fff;box-shadow:inset 1px 1px #808080,inset -1px -1px #fff,inset 2px 2px #404040,inset -2px -2px #d4d0c8;"></div>
<div class="t" style="left:598px;top:710px;">Vic.</div>
<div style="left:625px;top:709px;width:13px;height:13px;background:#fff;box-shadow:inset 1px 1px #808080,inset -1px -1px #fff,inset 2px 2px #404040,inset -2px -2px #d4d0c8;"></div>
<div class="t" style="left:642px;top:710px;">Ovl.</div>
<div style="left:669px;top:709px;width:13px;height:13px;background:#fff;box-shadow:inset 1px 1px #808080,inset -1px -1px #fff,inset 2px 2px #404040,inset -2px -2px #d4d0c8;"></div>
<svg style="left:669px;top:709px" width="13" height="13"><path d="M3 5h1v1h1v1h1v-1h1v-1h1v-1h1v-1h1v3h-1v1h-1v1h-1v1h-1v1h-1v-1h-1v-1h-1v-1h-1z" fill="#000"/></svg>
<div class="t" style="left:687px;top:710px;">Sats</div>
<div style="left:716px;top:709px;width:13px;height:13px;background:#fff;box-shadow:inset 1px 1px #808080,inset -1px -1px #fff,inset 2px 2px #404040,inset -2px -2px #d4d0c8;"></div>
<div class="t" style="left:733px;top:710px;">Acc</div>
<div style="left:761px;top:709px;width:13px;height:13px;background:#fff;box-shadow:inset 1px 1px #808080,inset -1px -1px #fff,inset 2px 2px #404040,inset -2px -2px #d4d0c8;"></div>
<div class="t" style="left:779px;top:710px;">50m</div>
<div style="left:429px;top:728px;width:16px;height:9px;background:#d4d0c8;box-shadow:inset -1px -1px #404040,inset 1px 1px #fff,inset -2px -2px #808080,inset 2px 2px #d4d0c8;"></div>
<div style="left:429px;top:737px;width:16px;height:10px;background:#d4d0c8;box-shadow:inset -1px -1px #404040,inset 1px 1px #fff,inset -2px -2px #808080,inset 2px 2px #d4d0c8;"></div>
<svg style="left:429px;top:728px" width="16" height="19" shape-rendering="crispEdges"><path d="M7 3h1v1h1v1h-3v-1h1z" fill="#000"/><path d="M6 13h3v1h-1v1h-1v-1h-1z" fill="#000"/></svg>
<svg style="left:460px;top:732px" width="12" height="12" shape-rendering="crispEdges"><path d="M4 0h4v1h2v1h1v2h1v4h-1v2h-1v1h-2v1h-4v-1h-2v-1h-1v-2h-1v-4h1v-2h1v-1h2z" fill="#fff"/><path d="M4 0h4v1h-4v1h-2v2h-1v4h-1v-4h1v-2h1v-1h2z" fill="#808080"/><path d="M4 1h4v1h2v1h-2v-1h-4v1h-1v1h-1v4h-1v-4h1v-2h1v-1h1z" fill="#404040"/><path d="M4 2h4v1h1v1h1v4h-1v1h-1v1h-4v-1h-1v-1h-1v-4h1v-1h1z" fill="#fff"/><path d="M10 3h1v5h-1v2h-2v1h-4v-1h4v-1h1v-1h1z" fill="#d4d0c8"/><path d="M5 4h2v1h1v2h-1v1h-2v-1h-1v-2h1z" fill="#000"/></svg>
<div class="t" style="left:477px;top:732px;">knots</div>
<svg style="left:511px;top:732px" width="12" height="12" shape-rendering="crispEdges"><path d="M4 0h4v1h2v1h1v2h1v4h-1v2h-1v1h-2v1h-4v-1h-2v-1h-1v-2h-1v-4h1v-2h1v-1h2z" fill="#fff"/><path d="M4 0h4v1h-4v1h-2v2h-1v4h-1v-4h1v-2h1v-1h2z" fill="#808080"/><path d="M4 1h4v1h2v1h-2v-1h-4v1h-1v1h-1v4h-1v-4h1v-2h1v-1h1z" fill="#404040"/><path d="M4 2h4v1h1v1h1v4h-1v1h-1v1h-4v-1h-1v-1h-1v-4h1v-1h1z" fill="#fff"/><path d="M10 3h1v5h-1v2h-2v1h-4v-1h4v-1h1v-1h1z" fill="#d4d0c8"/></svg>
<div class="t" style="left:529px;top:732px;">km/h</div>
<svg style="left:564px;top:732px" width="12" height="12" shape-rendering="crispEdges"><path d="M4 0h4v1h2v1h1v2h1v4h-1v2h-1v1h-2v1h-4v-1h-2v-1h-1v-2h-1v-4h1v-2h1v-1h2z" fill="#fff"/><path d="M4 0h4v1h-4v1h-2v2h-1v4h-1v-4h1v-2h1v-1h2z" fill="#808080"/><path d="M4 1h4v1h2v1h-2v-1h-4v1h-1v1h-1v4h-1v-4h1v-2h1v-1h1z" fill="#404040"/><path d="M4 2h4v1h1v1h1v4h-1v1h-1v1h-4v-1h-1v-1h-1v-4h1v-1h1z" fill="#fff"/><path d="M10 3h1v5h-1v2h-2v1h-4v-1h4v-1h1v-1h1z" fill="#d4d0c8"/></svg>
<div class="t" style="left:582px;top:732px;">mph</div>
<div style="left:614px;top:727px;width:30px;height:20px;background:#d4d0c8;box-shadow:inset -1px -1px #404040,inset 1px 1px #fff,inset -2px -2px #808080,inset 2px 2px #d4d0c8;"></div>
<div class="t" style="left:625px;top:732px;">&lt;</div>
<div style="left:648px;top:727px;width:38px;height:20px;background:#d4d0c8;box-shadow:inset -1px -1px #404040,inset 1px 1px #fff,inset -2px -2px #808080,inset 2px 2px #d4d0c8;"></div>
<div class="t" style="left:655px;top:732px;">Stop</div>
<div style="left:689px;top:727px;width:30px;height:20px;background:#d4d0c8;box-shadow:inset -1px -1px #404040,inset 1px 1px #fff,inset -2px -2px #808080,inset 2px 2px #d4d0c8;"></div>
<div class="t" style="left:699px;top:732px;">&gt;</div>
<div class="t" style="left:721px;top:732px;">Speed:</div>
<div style="left:760px;top:727px;width:52px;height:18px;background:#d4d0c8;box-shadow:inset 1px 1px #808080,inset -1px -1px #fff,inset 2px 2px #404040,inset -2px -2px #d4d0c8;"></div>
<div class="t" style="left:766px;top:729px;">0.10s</div>
<div style="left:795px;top:729px;width:15px;height:7px;background:#d4d0c8;box-shadow:inset -1px -1px #404040,inset 1px 1px #fff,inset -2px -2px #808080,inset 2px 2px #d4d0c8;"></div>
<div style="left:795px;top:736px;width:15px;height:7px;background:#d4d0c8;box-shadow:inset -1px -1px #404040,inset 1px 1px #fff,inset -2px -2px #808080,inset 2px 2px #d4d0c8;"></div>
<svg style="left:795px;top:729px" width="15" height="14" shape-rendering="crispEdges"><path d="M6 2h1v1h1v1h-3v-1h1z" fill="#000"/><path d="M5 9h3v1h-1v1h-1v-1h-1z" fill="#000"/></svg>
</body></html>
